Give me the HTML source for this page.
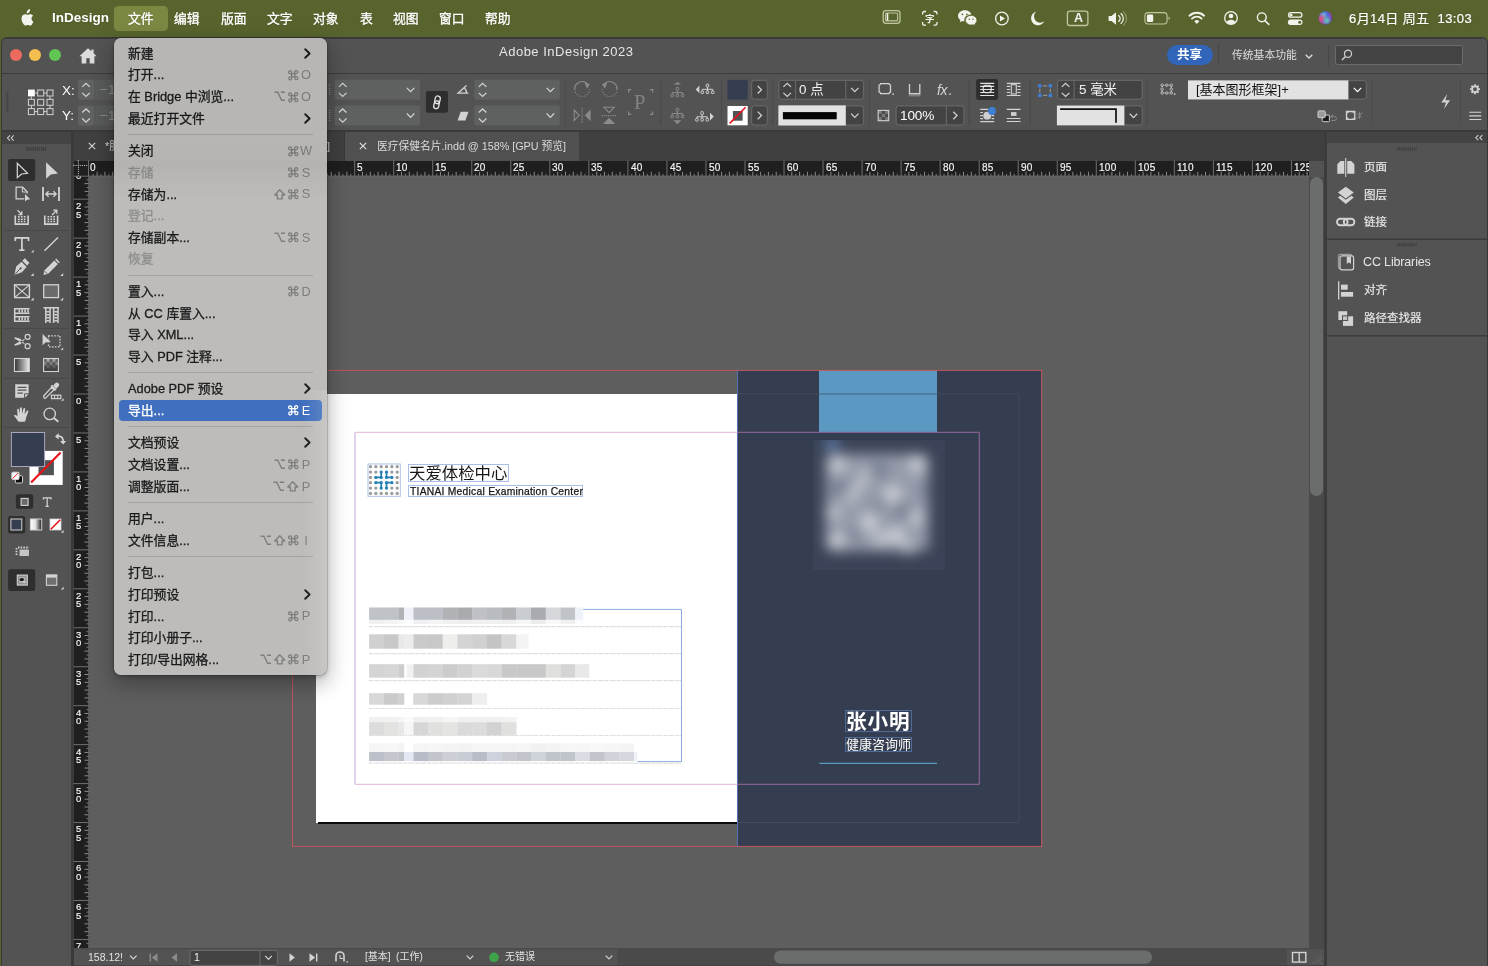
<!DOCTYPE html><html lang="zh-CN"><head><meta charset="utf-8"><title>Adobe InDesign 2023</title><style>
*{box-sizing:border-box;margin:0;padding:0}
html,body{width:1488px;height:966px;overflow:hidden;background:#58642d;}
body{font-family:"Liberation Sans","Noto Sans CJK SC",sans-serif;position:relative;color:#fff}
.abs{position:absolute}
.t,.mb,.mi,.rl,.rv{will-change:transform}
.t{position:absolute;white-space:nowrap;line-height:1}
svg{position:absolute;overflow:visible}
#menubar{position:absolute;left:0;top:0;width:1488px;height:37px;background:#58642d}
#win{position:absolute;left:2px;top:38px;width:1484.7px;height:928px;background:#535353;border-radius:5px 5px 0 0;overflow:hidden;box-shadow:0 0 0 1px #373737}
.mb{position:absolute;top:11px;font-size:13px;line-height:14px;color:#fff;white-space:nowrap;text-shadow:0 0 2px rgba(0,0,0,.25);-webkit-text-stroke:.3px #fff}
.mi{position:absolute;left:14px;font-size:12.8px;line-height:16px;color:#1c1c1c;white-space:nowrap;-webkit-text-stroke:.3px currentColor}
.mi.dis{color:#8d8d8b}
.sc{position:absolute;right:15.5px;font-size:12.8px;line-height:16px;color:#8c8c8a;white-space:nowrap}
.msep{position:absolute;left:14px;right:14px;height:1px;background:#a3a3a1}
.rv{position:absolute;font-size:9.5px;line-height:10px;color:#f6f6f6;-webkit-text-stroke:.16px #f6f6f6;white-space:nowrap}
.rl{position:absolute;letter-spacing:.3px;font-size:10px;line-height:10px;color:#f6f6f6;-webkit-text-stroke:.16px #f6f6f6;white-space:nowrap}
</style></head><body>
<div id="menubar"><div class="abs" style="left:114px;top:6px;width:54px;height:25px;border-radius:4.5px;background:#7b8842"></div><svg style="left:19px;top:8.6px;" width="15" height="18" viewBox="0 0 15 18" ><path fill="#f2f2ee" d="M10.3 2.9c.6-.8 1-1.800.9-2.900-.9.100-2 .6-2.600 1.400-.6.700-1.100 1.800-.9 2.800 1 .1 2-.5 2.600-1.300zM12.500 9.500c0-1.900 1.500-2.800 1.600-2.800-.9-1.300-2.200-1.500-2.700-1.500-1.200-.1-2.200.700-2.800.700-.6 0-1.500-.7-2.400-.6-1.300 0-2.400.700-3.100 1.800-1.300 2.300-.3 5.700 1 7.500.6.900 1.400 1.900 2.300 1.900.9 0 1.300-.6 2.400-.6 1.100 0 1.400.600 2.400.600 1 0 1.600-.9 2.200-1.800.7-1 1-2 1-2.100-.1 0-1.900-.7-1.900-3.100z"/></svg><div class="mb" style="left:52px;top:11.3px;font-weight:bold;font-size:13.5px;-webkit-text-stroke:0">InDesign</div><div class="mb" style="left:128px;top:11.7px;font-size:12.8px">文件</div><div class="mb" style="left:174px;top:11.7px;font-size:12.8px">编辑</div><div class="mb" style="left:220.5px;top:11.7px;font-size:12.8px">版面</div><div class="mb" style="left:267px;top:11.7px;font-size:12.8px">文字</div><div class="mb" style="left:313px;top:11.7px;font-size:12.8px">对象</div><div class="mb" style="left:359.5px;top:11.7px;font-size:12.8px">表</div><div class="mb" style="left:392.5px;top:11.7px;font-size:12.8px">视图</div><div class="mb" style="left:439px;top:11.7px;font-size:12.8px">窗口</div><div class="mb" style="left:485px;top:11.7px;font-size:12.8px">帮助</div><div class="mb" style="left:1348.5px;top:11.5px;font-size:13px;letter-spacing:.4px;-webkit-text-stroke:.2px #fff">6月14日 周五&nbsp; 13:03</div><svg style="left:0;top:0" width="1488" height="37" viewBox="0 0 1488 37"><rect x="883.200" y="10.600" width="16.800" height="12.700" rx="2.800" fill="none" stroke="#c2c5a0" stroke-width="1.300"/><rect x="885.600" y="13" width="12" height="7.900" rx="1" fill="none" stroke="#c2c5a0" stroke-width="1.100"/><path d="M887.500 13.300V20.600" stroke="#f3f3ee" stroke-width="1.600"/><path d="M922.600 14.600V13.200A1.700 1.700 0 0 1 924.300 11.500H926M933.600 11.500H935.300A1.700 1.700 0 0 1 937 13.200V14.600M937 22V23.500A1.700 1.700 0 0 1 935.300 25.200H933.600M926 25.200H924.300A1.700 1.700 0 0 1 922.600 23.500V22" fill="none" stroke="#f3f3ee" stroke-width="1.300"/><path d="M964.700 10.200C961 10.200 958 12.700 958 15.800C958 17.500 958.900 19 960.400 20.100L959.800 22.300L962.300 21C963 21.200 963.700 21.300 964.500 21.300C964.400 20.900 964.300 20.500 964.300 20C964.300 16.900 967.300 14.500 970.900 14.500C971.100 14.500 971.300 14.500 971.400 14.500C970.800 12 968 10.200 964.700 10.200z" fill="#f3f3ee"/><path d="M971.200 15.400C968 15.400 965.400 17.500 965.400 20.200C965.400 22.800 968 25 971.200 25C971.900 25 972.500 24.900 973.100 24.700L975.200 25.900L974.700 24C976 23.100 976.900 21.700 976.900 20.200C976.900 17.500 974.400 15.400 971.200 15.400z" fill="#f3f3ee" stroke="#58642d" stroke-width=".7"/><circle cx="962.400" cy="14.300" r=".85" fill="#58642d"/><circle cx="966.900" cy="14.300" r=".85" fill="#58642d"/><circle cx="969.300" cy="19.200" r=".75" fill="#58642d"/><circle cx="973" cy="19.200" r=".75" fill="#58642d"/><circle cx="1001.900" cy="18.500" r="6.300" fill="none" stroke="#f3f3ee" stroke-width="1.300"/><path d="M1000 15.500V21.500L1005 18.500z" fill="#f3f3ee"/><path d="M1036.300 11.600A6.900 6.900 0 1 0 1044.200 21.300A6.200 6.200 0 0 1 1036.300 11.600z" fill="#f3f3ee"/><rect x="1067.400" y="11.100" width="20.500" height="14.400" rx="2.600" fill="none" stroke="#c2c5a0" stroke-width="1.300"/><path d="M1108.600 16H1111.500L1116 12.300V24.700L1111.500 21H1108.600z" fill="#f3f3ee"/><path d="M1118.600 15.600A3.500 3.500 0 0 1 1118.600 21.400M1121 13.600A6.300 6.300 0 0 1 1121 23.400" fill="none" stroke="#f3f3ee" stroke-width="1.250" stroke-linecap="round"/><path d="M1123.600 11.800A9.200 9.200 0 0 1 1123.600 25.200" fill="none" stroke="#c2c5a0" stroke-width="1.100" stroke-linecap="round" opacity=".6"/><rect x="1144.900" y="12.600" width="22.200" height="11.400" rx="3.400" fill="none" stroke="#c2c5a0" stroke-width="1.100"/><path d="M1168.600 16.300V20.300L1170.200 18.300z" fill="#c2c5a0"/><rect x="1146.900" y="14.500" width="6.300" height="7.600" rx="1.400" fill="#f3f3ee"/><path d="M1189.500 15.700A10.500 10.500 0 0 1 1204.100 15.700M1192 18.600A6.800 6.800 0 0 1 1201.600 18.600" fill="none" stroke="#f3f3ee" stroke-width="1.900" stroke-linecap="round"/><path d="M1194.300 21.200A3.600 3.600 0 0 1 1199.300 21.200L1196.800 23.900z" fill="#f3f3ee"/><circle cx="1231" cy="18" r="6.300" fill="none" stroke="#f3f3ee" stroke-width="1.300"/><circle cx="1231" cy="16" r="2.300" fill="#f3f3ee"/><path d="M1226.600 22.200A4.600 3.600 0 0 1 1235.400 22.200A6 6 0 0 1 1226.600 22.200z" fill="#f3f3ee"/><circle cx="1261.800" cy="17.300" r="4.400" fill="none" stroke="#f3f3ee" stroke-width="1.400"/><path d="M1265 20.700L1268.800 24.400" stroke="#f3f3ee" stroke-width="1.600" stroke-linecap="round"/><rect x="1288.500" y="12.600" width="13.400" height="4.600" rx="2.300" fill="none" stroke="#f3f3ee" stroke-width="1.200"/><circle cx="1291" cy="14.900" r="1.500" fill="#f3f3ee"/><rect x="1287.900" y="19.500" width="14.600" height="5.400" rx="2.700" fill="#f3f3ee"/><circle cx="1299.700" cy="22.200" r="1.500" fill="#58642d"/><defs><radialGradient id="si1" cx=".35" cy=".3" r=".8"><stop offset="0" stop-color="#6fd0e8"/><stop offset=".35" stop-color="#4a6fd8"/><stop offset=".7" stop-color="#8a3fb8"/><stop offset="1" stop-color="#3a2a6a"/></radialGradient><radialGradient id="si2" cx=".2" cy=".55" r=".45"><stop offset="0" stop-color="#f04a7a"/><stop offset="1" stop-color="#f04a7a" stop-opacity="0"/></radialGradient><radialGradient id="si3" cx=".6" cy=".7" r=".4"><stop offset="0" stop-color="#5ad0c0"/><stop offset="1" stop-color="#5ad0c0" stop-opacity="0"/></radialGradient></defs><circle cx="1325.500" cy="18" r="6.800" fill="url(#si1)"/><circle cx="1325.500" cy="18" r="6.800" fill="url(#si2)"/><circle cx="1325.500" cy="18" r="6.800" fill="url(#si3)"/></svg><div class="t" style="left:925.3px;top:13.6px;font-size:9.5px;font-weight:bold;color:#f3f3ee">字</div><div class="t" style="left:1073.5px;top:12.4px;font-size:12.5px;font-weight:bold;color:#f3f3ee">A</div></div>
<div class="abs" style="left:1486px;top:42px;width:2px;height:924px;background:#595959"></div>
<div id="win"><div class="abs" style="left:0px;top:0px;width:1486px;height:1px;background:#3e3e3e"></div><div class="abs" style="left:0px;top:35px;width:1486px;height:1px;background:#3c3c3c"></div><div class="abs" style="left:7.8px;top:11px;width:12px;height:12px;border-radius:6px;background:#ec6a5e"></div><div class="abs" style="left:27.4px;top:11px;width:12px;height:12px;border-radius:6px;background:#f4bf4f"></div><div class="abs" style="left:47px;top:11px;width:12px;height:12px;border-radius:6px;background:#61c554"></div><svg style="left:76.7px;top:9.5px;" width="18" height="16" viewBox="0 0 18 16" ><path fill="#dcdcdc" d="M9 0.300L0.300 8.200h2.300V15.600h4.700V10.300h3.400V15.600h4.700V8.200h2.300L14.600 5.300V1.500h-2.200v1.800z"/></svg><div class="t" style="left:497px;top:6.8px;font-size:13px;color:#e6e6e6;letter-spacing:.5px">Adobe InDesign 2023</div><div class="abs" style="left:1165px;top:6.5px;width:45.5px;height:20.8px;border-radius:10.400px;background:#3065ba"></div><div class="abs" style="left:1216px;top:6px;width:1px;height:22px;background:#484848"></div><div class="t" style="left:1175px;top:10.5px;font-size:12.5px;font-weight:bold;color:#fff">共享</div><div class="t" style="left:1229.5px;top:11.5px;font-size:10.8px;color:#dcdcdc">传统基本功能</div><svg style="left:1303px;top:15.5px;" width="8" height="5" viewBox="0 0 8 5" ><path d="M.7.700l3.300 3.300L7.300.700" fill="none" stroke="#dcdcdc" stroke-width="1.300"/></svg><div class="abs" style="left:1326px;top:6px;width:1px;height:22px;background:#474747"></div><div class="abs" style="left:1332.5px;top:7.3px;width:128px;height:19.3px;background:#444;border:1px solid #6c6c6c;border-radius:2.500px"></div><svg style="left:1339px;top:11px;" width="12" height="12" viewBox="0 0 12 12" ><circle cx="7" cy="4.800" r="3.600" fill="none" stroke="#cfcfcf" stroke-width="1.200"/><path d="M4.500 7.500L1 11" stroke="#cfcfcf" stroke-width="1.400"/></svg><div class="abs" style="left:0px;top:92px;width:1486px;height:2px;background:#3a3a3a"></div><div class="abs" style="left:0px;top:94px;width:70px;height:11.5px;background:#444"></div><svg style="left:5.3px;top:96.5px;" width="7" height="6" viewBox="0 0 7 6" ><path d="M3 .3L.5 3L3 5.700M6.700 .3L4.200 3L6.700 5.700" fill="none" stroke="#cfcfcf" stroke-width="1.100"/></svg><div class="abs" style="left:69.2px;top:93px;width:2.5px;height:840px;background:#3a3a3a"></div><div class="abs" style="left:71.5px;top:93.5px;width:1252.5px;height:29px;background:#404040"></div><div class="abs" style="left:343.2px;top:94px;width:233.5px;height:28.5px;background:#505050"></div><div class="abs" style="left:342.2px;top:94px;width:1px;height:28.5px;background:#383838"></div><svg style="left:85.6px;top:104px;" width="8" height="8" viewBox="0 0 8 8" ><path d="M.8.800l6.400 6.400M7.200.800L.8 7.200" stroke="#d6d6d6" stroke-width="1.100"/></svg><div class="t" style="left:102.7px;top:103px;font-size:11px;color:#d6d6d6">*服</div><div class="t" style="left:324.5px;top:103px;font-size:11px;color:#d6d6d6">]</div><svg style="left:357px;top:104px;" width="8" height="8" viewBox="0 0 8 8" ><path d="M.8.800l6.400 6.400M7.200.800L.8 7.200" stroke="#e2e2e2" stroke-width="1.100"/></svg><div class="t" style="left:374.5px;top:102.5px;font-size:10.8px;color:#dadada;letter-spacing:-.03px">医疗保健名片.indd @ 158% [GPU 预览]</div><svg style="left:0px;top:0px;" width="1486" height="928" viewBox="2 38 1486 928" ><path d="M7.300 92.500V112.500" stroke="#3f3f3f" stroke-width="2.400" stroke-dasharray="1.100 .9"/><rect x="28" y="89.6" width="6.800" height="6.800" fill="#fff"/><rect x="28.4" y="99.3" width="6" height="6" fill="none" stroke="#d3d3d3" stroke-width="1"/><rect x="28.4" y="108.6" width="6" height="6" fill="none" stroke="#d3d3d3" stroke-width="1"/><rect x="37.7" y="90" width="6" height="6" fill="none" stroke="#d3d3d3" stroke-width="1"/><rect x="37.7" y="99.3" width="6" height="6" fill="none" stroke="#d3d3d3" stroke-width="1"/><rect x="37.7" y="108.6" width="6" height="6" fill="none" stroke="#d3d3d3" stroke-width="1"/><rect x="47" y="90" width="6" height="6" fill="none" stroke="#d3d3d3" stroke-width="1"/><rect x="47" y="99.3" width="6" height="6" fill="none" stroke="#d3d3d3" stroke-width="1"/><rect x="47" y="108.6" width="6" height="6" fill="none" stroke="#d3d3d3" stroke-width="1"/><path d="M34.800 93H37.700M44.100 93H47M34.800 111.600H37.700M44.100 111.600H47M31.400 96.400V99.300M31.400 105.700V108.600M50 96.400V99.300M50 105.700V108.600" stroke="#d3d3d3" stroke-width="1"/><rect x="78" y="79.8" width="16" height="19.9" rx="2" fill="#606261"/><rect x="94.500" y="79.8" width="22" height="19.9" fill="#595b5a"/><path d="M82.2 86.85L86 83.25L89.8 86.85" fill="none" stroke="#d3d3d3" stroke-width="1.25"/><path d="M82.2 92.85L86 96.45L89.8 92.85" fill="none" stroke="#d3d3d3" stroke-width="1.25"/><rect x="78" y="105.4" width="16" height="20.1" rx="2" fill="#606261"/><rect x="94.500" y="105.4" width="22" height="20.1" fill="#595b5a"/><path d="M82.2 112.55L86 108.95L89.8 112.55" fill="none" stroke="#d3d3d3" stroke-width="1.25"/><path d="M82.2 118.55L86 122.15L89.8 118.55" fill="none" stroke="#d3d3d3" stroke-width="1.25"/><rect x="334.800" y="79.8" width="85.200" height="19.9" rx="2" fill="#5f6160"/><path d="M338.9 86.85L342.7 83.25L346.5 86.85" fill="none" stroke="#d3d3d3" stroke-width="1.25"/><path d="M338.9 92.85L342.7 96.45L346.5 92.85" fill="none" stroke="#d3d3d3" stroke-width="1.25"/><path d="M406.9 87.85L410.6 91.65L414.3 87.85" fill="none" stroke="#d3d3d3" stroke-width="1.25"/><rect x="474.300" y="79.8" width="85.500" height="19.9" rx="2" fill="#5f6160"/><path d="M478.8 86.85L482.6 83.25L486.4 86.85" fill="none" stroke="#d3d3d3" stroke-width="1.25"/><path d="M478.8 92.85L482.6 96.45L486.4 92.85" fill="none" stroke="#d3d3d3" stroke-width="1.25"/><path d="M546.7 87.85L550.4 91.65L554.1 87.85" fill="none" stroke="#d3d3d3" stroke-width="1.25"/><rect x="334.800" y="105.4" width="85.200" height="20.1" rx="2" fill="#5f6160"/><path d="M338.9 112.55L342.7 108.95L346.5 112.55" fill="none" stroke="#d3d3d3" stroke-width="1.25"/><path d="M338.9 118.55L342.7 122.15L346.5 118.55" fill="none" stroke="#d3d3d3" stroke-width="1.25"/><path d="M406.9 113.55L410.6 117.35L414.3 113.55" fill="none" stroke="#d3d3d3" stroke-width="1.25"/><rect x="474.300" y="105.4" width="85.500" height="20.1" rx="2" fill="#5f6160"/><path d="M478.8 112.55L482.6 108.95L486.4 112.55" fill="none" stroke="#d3d3d3" stroke-width="1.25"/><path d="M478.8 118.55L482.6 122.15L486.4 118.55" fill="none" stroke="#d3d3d3" stroke-width="1.25"/><path d="M546.7 113.55L550.4 117.35L554.1 113.55" fill="none" stroke="#d3d3d3" stroke-width="1.25"/><path d="M329.500 84V95M329.500 110V121" stroke="#8b8b8b" stroke-width="1.200" stroke-dasharray="1 1"/><rect x="425.900" y="90.900" width="22.100" height="21.900" rx="2.200" fill="#2e2e2e"/><g transform="rotate(12 437 102.300)"><rect x="434.500" y="95.900" width="5" height="7.800" rx="2.500" fill="none" stroke="#e6e6e6" stroke-width="1.300"/><rect x="434.500" y="100.900" width="5" height="7.800" rx="2.500" fill="none" stroke="#e6e6e6" stroke-width="1.300"/><path d="M437 99.500V105" stroke="#2e2e2e" stroke-width="0"/></g><path d="M466.500 85.500L458 93.200H468.400M464 87.500Q466.800 90 466.600 93.200" fill="none" stroke="#d3d3d3" stroke-width="1.250"/><path d="M460.700 111.800H468.500L465.400 120.500H457.600z" fill="#d3d3d3"/><path d="M565.4 80V125.500" stroke="#494949" stroke-width="1"/><path d="M574.700 89A7.500 7.500 0 0 1 587.300 83.600" fill="none" stroke="#8b8b8b" stroke-width="1.200"/><path d="M584.500 82.200L590 84.300L586.800 88.500z" fill="#8b8b8b"/><path d="M574.700 89A7.500 7.500 0 0 0 589.700 89" fill="none" stroke="#8b8b8b" stroke-width="1.200" stroke-dasharray="1.100 1.700"/><path d="M617.100 89A7.500 7.500 0 0 0 604.500 83.600" fill="none" stroke="#8b8b8b" stroke-width="1.200"/><path d="M607.300 82.200L601.800 84.300L605 88.500z" fill="#8b8b8b"/><path d="M617.100 89A7.500 7.500 0 0 1 602.100 89" fill="none" stroke="#8b8b8b" stroke-width="1.200" stroke-dasharray="1.100 1.700"/><path d="M574.200 110V120.600L579.200 115.300z" fill="none" stroke="#8b8b8b" stroke-width="1.100"/><path d="M590.600 109.400V121.200L584.800 115.300z" fill="#8b8b8b"/><path d="M582.200 108V123" stroke="#8b8b8b" stroke-width="1.200" stroke-dasharray="1.200 1"/><path d="M604 107.300H614.200L609.100 112.600z" fill="none" stroke="#8b8b8b" stroke-width="1.100"/><path d="M603 124H615.200L609.100 117.700z" fill="#8b8b8b"/><path d="M601.500 115.600H616.500" stroke="#8b8b8b" stroke-width="1.200" stroke-dasharray="1.200 1"/><path d="M628.600 92.400V89.700H631.300M650 89.700H652.700V92.400M652.700 111.600V114.300H650M631.300 114.300H628.600V111.600" fill="none" stroke="#8b8b8b" stroke-width="1.200"/><path d="M660.7 80V125.500" stroke="#494949" stroke-width="1"/><g fill="none" stroke="#8b8b8b" stroke-width="1"><rect x="676.1" y="87.4" width="2.600" height="3" rx=".8"/><path d="M677.4 90.4V94.3M672.2 92.6H682.6M672.2 92.6V94.3M682.6 92.6V94.3"/><rect x="670.9" y="94.3" width="2.600" height="2.600" rx=".8"/><rect x="676.1" y="94.3" width="2.600" height="2.600" rx=".8"/><rect x="681.3" y="94.3" width="2.600" height="2.600" rx=".8"/></g><path d="M673.700 84.600H681.100L677.400 82z" fill="#8b8b8b"/><g fill="none" stroke="#8b8b8b" stroke-width="1"><rect x="676.1" y="108.3" width="2.600" height="3" rx=".8"/><path d="M677.4 111.3V115.2M672.2 113.5H682.6M672.2 113.5V115.2M682.6 113.5V115.2"/><rect x="670.9" y="115.2" width="2.600" height="2.600" rx=".8"/><rect x="676.1" y="115.2" width="2.600" height="2.600" rx=".8"/><rect x="681.3" y="115.2" width="2.600" height="2.600" rx=".8"/></g><path d="M673.400 120.300H681.400L677.400 124.200z" fill="#8b8b8b"/><g fill="none" stroke="#d3d3d3" stroke-width="1"><rect x="706.2" y="84.1" width="2.600" height="3" rx=".8"/><path d="M707.5 87.1V91M702.3 89.3H712.7M702.3 89.3V91M712.7 89.3V91"/><rect x="701" y="91" width="2.600" height="2.600" rx=".8"/><rect x="706.2" y="91" width="2.600" height="2.600" rx=".8"/><rect x="711.4" y="91" width="2.600" height="2.600" rx=".8"/></g><path d="M699.400 85.500V93.300L695.800 89.400z" fill="#d3d3d3"/><g fill="none" stroke="#d3d3d3" stroke-width="1"><rect x="700.8" y="111.6" width="2.600" height="3" rx=".8"/><path d="M702.1 114.6V118.5M696.9 116.8H707.3M696.9 116.8V118.5M707.3 116.8V118.5"/><rect x="695.6" y="118.5" width="2.600" height="2.600" rx=".8"/><rect x="700.8" y="118.5" width="2.600" height="2.600" rx=".8"/><rect x="706" y="118.5" width="2.600" height="2.600" rx=".8"/></g><path d="M710 112.700V120.500L713.800 116.600z" fill="#d3d3d3"/><path d="M721.5 80V125.500" stroke="#494949" stroke-width="1"/><rect x="727.500" y="79.800" width="20.200" height="19.700" fill="#353d50"/><rect x="727.500" y="106" width="20.200" height="19.300" fill="#fff"/><rect x="732.900" y="111" width="9.700" height="9.700" fill="#4f5354"/><path d="M729.700 123.400L745.600 107.300" stroke="#e8131a" stroke-width="1.500"/><rect x="751.700" y="80.3" width="15.600" height="18.9" rx="2.500" fill="#434343" stroke="#6c6c6c" stroke-width="1"/><path d="M757.7 85.95L761.5 89.75L757.7 93.55" fill="none" stroke="#d3d3d3" stroke-width="1.25"/><rect x="751.700" y="105.9" width="15.600" height="19.1" rx="2.500" fill="#434343" stroke="#6c6c6c" stroke-width="1"/><path d="M757.7 111.65L761.5 115.45L757.7 119.25" fill="none" stroke="#d3d3d3" stroke-width="1.25"/><path d="M772.7 80V125.500" stroke="#494949" stroke-width="1"/><rect x="778.900" y="80.300" width="84.500" height="18.900" rx="2.500" fill="#434343" stroke="#6c6c6c" stroke-width="1"/><path d="M795.600 80.300V99.200M845.800 80.300V99.200" stroke="#6c6c6c" stroke-width="1"/><path d="M783.4 86.85L787.2 83.25L791 86.85" fill="none" stroke="#d3d3d3" stroke-width="1.25"/><path d="M783.4 92.85L787.2 96.45L791 92.85" fill="none" stroke="#d3d3d3" stroke-width="1.25"/><path d="M851.1 87.9L854.8 91.7L858.5 87.9" fill="none" stroke="#d3d3d3" stroke-width="1.25"/><rect x="778.900" y="105.900" width="84.500" height="19.100" rx="2.500" fill="#434343" stroke="#6c6c6c" stroke-width="1"/><rect x="778.400" y="105.400" width="67.400" height="20.100" fill="#e2e2e2"/><rect x="782.900" y="112.100" width="53.800" height="7.200" fill="#050505"/><path d="M851.1 113.6L854.8 117.4L858.5 113.6" fill="none" stroke="#d3d3d3" stroke-width="1.25"/><path d="M869.5 80V125.500" stroke="#494949" stroke-width="1"/><path d="M880.600 83.500H889A1.500 1.500 0 0 0 890.500 85V92.200A1.500 1.500 0 0 0 889 93.700H880.600A1.500 1.500 0 0 0 879.100 92.200V85A1.500 1.500 0 0 0 880.600 83.500z" fill="none" stroke="#d3d3d3" stroke-width="1.250"/><rect x="892.300" y="93.400" width="1.500" height="1.500" fill="#d3d3d3"/><defs><linearGradient id="sh1" x1="0" x2="0" y1="0" y2="1"><stop offset="0" stop-color="#aaa" stop-opacity=".8"/><stop offset="1" stop-color="#aaa" stop-opacity="0"/></linearGradient></defs><path d="M909.500 84.100V93.600H919.800V84.100" fill="none" stroke="#d3d3d3" stroke-width="1.300"/><rect x="908.800" y="94.300" width="11.700" height="3" fill="url(#sh1)"/><rect x="949.300" y="93.400" width="1.500" height="1.500" fill="#d3d3d3"/><rect x="878.6" y="110.6" width="3.300" height="3.300" fill="#7b7b7b"/><rect x="878.6" y="113.9" width="3.300" height="3.300" fill="#4a4a4a"/><rect x="878.6" y="117.2" width="3.300" height="3.300" fill="#7b7b7b"/><rect x="881.9" y="110.6" width="3.300" height="3.300" fill="#4a4a4a"/><rect x="881.9" y="113.9" width="3.300" height="3.300" fill="#7b7b7b"/><rect x="881.9" y="117.2" width="3.300" height="3.300" fill="#4a4a4a"/><rect x="885.2" y="110.6" width="3.300" height="3.300" fill="#7b7b7b"/><rect x="885.2" y="113.9" width="3.300" height="3.300" fill="#4a4a4a"/><rect x="885.2" y="117.2" width="3.300" height="3.300" fill="#7b7b7b"/><rect x="878.200" y="110.400" width="10.500" height="10.300" fill="none" stroke="#d3d3d3" stroke-width="1.100"/><rect x="896.100" y="105.900" width="67.800" height="19.100" rx="2.500" fill="#434343" stroke="#6c6c6c" stroke-width="1"/><path d="M946.300 105.900V125M" stroke="#6c6c6c" stroke-width="1"/><path d="M953.3 111.7L957.1 115.5L953.3 119.3" fill="none" stroke="#d3d3d3" stroke-width="1.25"/><path d="M969.1 80V125.500" stroke="#494949" stroke-width="1"/><rect x="976.200" y="79.100" width="21.800" height="20.900" rx="2.500" fill="#2e2e2e"/><path d="M980.200 83.400H994.200M980.200 86.400H994.200M980.200 89.500H994.200M980.200 92.500H994.200M980.200 95.500H994.200" stroke="#e4e4e4" stroke-width="1.100"/><rect x="983.200" y="85.200" width="8" height="7.400" rx="2.500" fill="none" stroke="#e4e4e4" stroke-width="1.100"/><path d="M1006.800 83.400H1020.500M1006.800 86.400H1010M1017.500 86.400H1020.500M1006.800 89.500H1010M1017.500 89.500H1020.500M1006.800 92.500H1010M1017.500 92.500H1020.500M1006.800 95.500H1020.500" stroke="#d3d3d3" stroke-width="1.100"/><rect x="1011.300" y="84.700" width="5" height="9.300" fill="none" stroke="#d3d3d3" stroke-width="1.100"/><path d="M980.200 109.400H988M980.200 112.500H983M980.200 115.600H983M980.200 118.600H983M991.500 115.600H994.200M991.500 118.600H994.200M980.200 121.600H994.200" stroke="#d3d3d3" stroke-width="1.100"/><circle cx="987.200" cy="115.700" r="3.900" fill="#cfcfcf"/><circle cx="992" cy="111" r="3.900" fill="#3d7fd6"/><path d="M1006.800 109.400H1020.500M1006.800 118.500H1020.500M1006.800 121.500H1020.500" stroke="#d3d3d3" stroke-width="1.100"/><rect x="1011" y="112.100" width="5.500" height="3.800" fill="#cfcfcf"/><path d="M1030.4 80V125.500" stroke="#494949" stroke-width="1"/><rect x="1038.1" y="84.1" width="3.500" height="3.400" fill="#3d7fd6"/><rect x="1048.6" y="84.1" width="3.500" height="3.400" fill="#3d7fd6"/><rect x="1038.1" y="93.7" width="3.500" height="3.400" fill="#3d7fd6"/><rect x="1048.6" y="93.7" width="3.500" height="3.400" fill="#3d7fd6"/><path d="M1043 85.800H1047.200M1043 95.400H1047.200M1039.800 88.700V92.500M1050.300 88.700V92.500" stroke="#8f8f8f" stroke-width="1.300"/><rect x="1057.400" y="80.300" width="84.800" height="18.900" rx="2.500" fill="#434343" stroke="#6c6c6c" stroke-width="1"/><path d="M1074.100 80.300V99.200" stroke="#6c6c6c" stroke-width="1"/><path d="M1061.8 86.85L1065.6 83.25L1069.4 86.85" fill="none" stroke="#d3d3d3" stroke-width="1.25"/><path d="M1061.8 92.85L1065.6 96.45L1069.4 92.85" fill="none" stroke="#d3d3d3" stroke-width="1.25"/><rect x="1057.400" y="105.900" width="84.800" height="19.100" rx="2.500" fill="#434343" stroke="#6c6c6c" stroke-width="1"/><rect x="1056.900" y="105.600" width="67.500" height="19.700" fill="#e2e2e2"/><path d="M1060.100 109.200H1116V122.800" fill="none" stroke="#111" stroke-width="1.700"/><path d="M1129.8 113.8L1133.5 117.6L1137.2 113.8" fill="none" stroke="#d3d3d3" stroke-width="1.25"/><path d="M1147.2 80V125.500" stroke="#494949" stroke-width="1"/><rect x="1162.100" y="85.200" width="9.300" height="7.800" fill="none" stroke="#d3d3d3" stroke-width="1.100" stroke-dasharray="1.500 1"/><rect x="1161" y="84.1" width="2.200" height="2.200" rx=".6" fill="#535353" stroke="#d3d3d3" stroke-width=".8"/><rect x="1165.6" y="84.1" width="2.200" height="2.200" rx=".6" fill="#535353" stroke="#d3d3d3" stroke-width=".8"/><rect x="1170.2" y="84.1" width="2.200" height="2.200" rx=".6" fill="#535353" stroke="#d3d3d3" stroke-width=".8"/><rect x="1161" y="91.9" width="2.200" height="2.200" rx=".6" fill="#535353" stroke="#d3d3d3" stroke-width=".8"/><rect x="1165.6" y="91.9" width="2.200" height="2.200" rx=".6" fill="#535353" stroke="#d3d3d3" stroke-width=".8"/><rect x="1170.2" y="91.9" width="2.200" height="2.200" rx=".6" fill="#535353" stroke="#d3d3d3" stroke-width=".8"/><rect x="1161" y="88" width="2.200" height="2.200" rx=".6" fill="#535353" stroke="#d3d3d3" stroke-width=".8"/><rect x="1170.2" y="88" width="2.200" height="2.200" rx=".6" fill="#535353" stroke="#d3d3d3" stroke-width=".8"/><rect x="1173.900" y="93.400" width="1.500" height="1.500" fill="#d3d3d3"/><rect x="1188.500" y="80.700" width="177.800" height="18.400" rx="2.500" fill="#434343" stroke="#6c6c6c" stroke-width="1"/><rect x="1188" y="80.400" width="160.400" height="19" fill="#e2e2e2"/><path d="M1353.8 87.9L1357.5 91.7L1361.2 87.9" fill="none" stroke="#fff" stroke-width="1.25"/><rect x="1322.200" y="115" width="7.200" height="6.700" rx="1" fill="#1b1b1b" stroke="#d3d3d3" stroke-width="1"/><rect x="1318" y="110.900" width="7.200" height="6.700" rx="1" fill="#9a9a9a" stroke="#d3d3d3" stroke-width="1"/><path d="M1331 116.300H1334.300A2.100 2.100 0 0 1 1334.300 120.500H1331.500M1332.800 114.400L1330.800 116.300L1332.800 118.200" fill="none" stroke="#8b8b8b" stroke-width="1"/><path d="M1346.500 111.500H1354.800V119.400H1346.500z" fill="none" stroke="#d3d3d3" stroke-width="1.300"/><path d="M1346.500 111.500h2.500v1h-1.500v1.500h-1zM1354.800 111.500v2.500h-1v-1.500h-1.500v-1zM1346.500 119.400v-2.500h1v1.500h1.500v1zM1354.800 119.400h-2.500v-1h1.500v-1.500h1z" fill="#d3d3d3"/><path d="M1356.500 118.800L1362.500 112.300M1357.300 113.300L1361.800 117.600M1359.500 111.800V119" stroke="#8b8b8b" stroke-width=".9"/><path d="M1372.400 80V125.500M1460.500 80V125.500" stroke="#4b4b4b" stroke-width="1"/><path d="M1447.300 94L1441.300 102.600H1446L1444 109L1450.100 100.200H1445.400z" fill="#d3d3d3"/><circle cx="1475" cy="89.200" r="2.900" fill="none" stroke="#d3d3d3" stroke-width="1.800"/><path d="M1478.4 89.2L1480 89.2" stroke="#d3d3d3" stroke-width="1.800"/><path d="M1477.4 91.6L1478.54 92.74" stroke="#d3d3d3" stroke-width="1.800"/><path d="M1475 92.6L1475 94.2" stroke="#d3d3d3" stroke-width="1.800"/><path d="M1472.6 91.6L1471.46 92.74" stroke="#d3d3d3" stroke-width="1.800"/><path d="M1471.6 89.2L1470 89.2" stroke="#d3d3d3" stroke-width="1.800"/><path d="M1472.6 86.8L1471.46 85.66" stroke="#d3d3d3" stroke-width="1.800"/><path d="M1475 85.8L1475 84.2" stroke="#d3d3d3" stroke-width="1.800"/><path d="M1477.4 86.8L1478.54 85.66" stroke="#d3d3d3" stroke-width="1.800"/><path d="M1469.300 112.300H1481.300M1469.300 115.900H1481.300M1469.300 119.500H1481.300" stroke="#d3d3d3" stroke-width="1.100"/></svg><div class="t" style="left:59.8px;top:45.8px;font-size:13.5px;color:#fff">X:</div><div class="t" style="left:59.8px;top:71.4px;font-size:13.5px;color:#fff">Y:</div><div class="t" style="left:97.5px;top:45.3px;font-size:13.5px;color:#8a8a8a">−1</div><div class="t" style="left:97.5px;top:70.9px;font-size:13.5px;color:#8a8a8a">−1</div><div class="t" style="left:631.6px;top:54px;font-family:'Liberation Serif',serif;font-size:20.5px;color:#838383">P</div><div class="t" style="left:797.4px;top:44.6px;font-size:13.4px;color:#f2f2f2">0 点</div><div class="t" style="left:898.4px;top:70.8px;font-size:13.6px;color:#fff;letter-spacing:-.15px">100%</div><div class="t" style="left:1077.3px;top:44.6px;font-size:13.4px;color:#f2f2f2">5 毫米</div><div class="t" style="left:1194px;top:45.2px;font-size:13px;color:#111">[基本图形框架]+</div><div class="t" style="left:935.2px;top:44.6px;font-size:14px;font-style:italic;color:#d3d3d3;letter-spacing:-.3px">fx</div><svg style="left:0px;top:0px;" width="1486" height="928" viewBox="2 38 1486 928" ><path d="M26.300 149H46" stroke="#3e3e3e" stroke-width="4" stroke-dasharray="1.200 .9"/><rect x="8.100" y="159.100" width="27.100" height="21.800" rx="2.200" fill="#2e2e2e"/><path d="M17.3 163.200V177.700L21.600 174L27.500 173.300z" fill="none" stroke="#d3d3d3" stroke-width="1.250" stroke-linejoin="miter"/><path d="M46.1 162.200V178.700L50.800 174.600L58 173.600z" fill="#d3d3d3"/><path d="M24.3 198.800H16.100V187.200H22.600L27.200 191.800V193.500" fill="none" stroke="#d3d3d3" stroke-width="1.250"/><path d="M22.4 187.400V192H27" fill="none" stroke="#d3d3d3" stroke-width="1"/><path d="M25 194V201.600L27 199.700L30.200 199.200z" fill="#d3d3d3"/><path d="M43 187.100V201.100M59 187.100V201.100" stroke="#d3d3d3" stroke-width="1.800"/><path d="M46 194H56M48.600 191.300L45.800 194L48.600 196.700M53.400 191.300L56.200 194L53.400 196.700" fill="none" stroke="#d3d3d3" stroke-width="1.300"/><path d="M15.3 215.500V224.100H28.100V215.500" fill="none" stroke="#d3d3d3" stroke-width="1.600"/><path d="M18 216.800H25.500M18 219.200H25.500M18 221.600H25.500" stroke="#d3d3d3" stroke-width="1.500" stroke-dasharray="1.700 1.200"/><path d="M17.5 210.300L21.500 214.300M18.400 214.600H21.800V211.200" fill="none" stroke="#d3d3d3" stroke-width="1.300"/><path d="M44.800 215.500V224.100H57.600V215.500" fill="none" stroke="#d3d3d3" stroke-width="1.600"/><path d="M47.500 216.800H55M47.500 219.200H55M47.500 221.600H55" stroke="#d3d3d3" stroke-width="1.500" stroke-dasharray="1.700 1.200"/><path d="M52 215L56.500 210.500M53.200 210.200H56.800V213.800" fill="none" stroke="#d3d3d3" stroke-width="1.300"/><path d="M4.500 230.6H70" stroke="#484848" stroke-width="1"/><path d="M4.500 328.4H70" stroke="#484848" stroke-width="1"/><path d="M4.500 378.4H70" stroke="#484848" stroke-width="1"/><path d="M4.500 427.4H70" stroke="#484848" stroke-width="1"/><path d="M15.3 241V237.800H28.500V241M21.900 237.800V250.200M19.300 250.200H24.500" fill="none" stroke="#d3d3d3" stroke-width="1.700"/><path d="M33.7 252.4L33.7 249.8L31.1 252.4z" fill="#d3d3d3"/><path d="M44.500 250.800L58 237.400" stroke="#d3d3d3" stroke-width="1.400"/><path d="M14.3 275L16.200 266.500L21.500 261.800L26.600 266.900L21.900 272.200z" fill="#d3d3d3"/><path d="M22.300 260.800L24.800 258.300L29.500 263L27 265.500z" fill="#d3d3d3"/><path d="M14.600 274.700L20.200 268.700" stroke="#535353" stroke-width="1"/><circle cx="20.700" cy="268.300" r="1.100" fill="#535353"/><path d="M33.7 275.9L33.7 272.9L30.7 275.9z" fill="#d3d3d3"/><path d="M43.400 275L44.600 270.200L54.300 260.500L57.900 264.100L48.200 273.800z" fill="#d3d3d3"/><path d="M55.100 259.700L56.200 258.600L59.800 262.200L58.700 263.300z" fill="#d3d3d3"/><path d="M44.900 271.300L47.200 273.600" stroke="#535353" stroke-width=".9"/><path d="M63.2 275.9L63.2 272.9L60.2 275.9z" fill="#d3d3d3"/><rect x="14.600" y="284.800" width="14.800" height="12.800" fill="none" stroke="#d3d3d3" stroke-width="1.400"/><path d="M14.600 284.800L29.400 297.600M29.400 284.800L14.600 297.600" stroke="#d3d3d3" stroke-width="1.100"/><path d="M33.7 300.5L33.7 297.5L30.7 300.5z" fill="#d3d3d3"/><rect x="43.700" y="284.800" width="14.800" height="12.800" fill="#6b6b6b" stroke="#d3d3d3" stroke-width="1.300"/><path d="M63.2 300.5L63.2 297.5L60.2 300.5z" fill="#d3d3d3"/><path d="M14.700 308.800H29.500M14.700 313.200H29.500M14.700 316.800H29.500M14.700 321.200H29.500M14.700 308V322" fill="none" stroke="#d3d3d3" stroke-width="1.500"/><path d="M18.500 311H29.500M18.500 319H29.500" stroke="#d3d3d3" stroke-width="2.900" stroke-dasharray="1.600 1.300"/><path d="M43.500 307.800H59M45.800 308V323M50 308V323M53.600 308V323M58 308V323" fill="none" stroke="#d3d3d3" stroke-width="1.500"/><path d="M47.900 311V323M55.800 311V323" stroke="#d3d3d3" stroke-width="2.900" stroke-dasharray="1.600 1.400"/><circle cx="27.600" cy="336.800" r="2.500" fill="none" stroke="#d3d3d3" stroke-width="1.200"/><circle cx="27.600" cy="346.200" r="2.500" fill="none" stroke="#d3d3d3" stroke-width="1.200"/><path d="M25.600 338.200L14.300 344.600L15 345.700L20.500 344.200zM25.600 344.800L14.300 338.400L15 337.300L20.500 338.800z" fill="#d3d3d3"/><rect x="48.500" y="335.800" width="11.500" height="11" fill="none" stroke="#d3d3d3" stroke-width="1.300" stroke-dasharray="1.600 1.300"/><path d="M42.300 333.600V345.800L45.500 342.800L51.200 342z" fill="#d3d3d3" stroke="#535353" stroke-width=".5"/><path d="M63.2 350L63.2 347.4L60.6 350z" fill="#d3d3d3"/><defs><linearGradient id="gd1" x1="0" x2="1" y1="0" y2="0"><stop offset="0" stop-color="#303030"/><stop offset="1" stop-color="#ececec"/></linearGradient><linearGradient id="gd2" x1="0" x2="0" y1="0" y2="1"><stop offset="0" stop-color="#333" stop-opacity="0"/><stop offset="1" stop-color="#333" stop-opacity="1"/></linearGradient><linearGradient id="gd3" x1="0" x2="1" y1="0" y2="0"><stop offset="0" stop-color="#fff"/><stop offset=".45" stop-color="#e0e0e0"/><stop offset="1" stop-color="#1c1c1c"/></linearGradient></defs><rect x="14.500" y="358.500" width="14.800" height="13" fill="url(#gd1)" stroke="#d3d3d3" stroke-width="1.100"/><rect x="43.600" y="358.500" width="14.800" height="13" fill="#b4b4b4"/><rect x="43.8" y="359" width="2.900" height="3.200" fill="#6a6a6a"/><rect x="43.8" y="365.4" width="2.900" height="3.200" fill="#6a6a6a"/><rect x="46.7" y="362.2" width="2.900" height="3.200" fill="#6a6a6a"/><rect x="46.7" y="368.6" width="2.900" height="3.200" fill="#6a6a6a"/><rect x="49.6" y="359" width="2.900" height="3.200" fill="#6a6a6a"/><rect x="49.6" y="365.4" width="2.900" height="3.200" fill="#6a6a6a"/><rect x="52.5" y="362.2" width="2.900" height="3.200" fill="#6a6a6a"/><rect x="52.5" y="368.6" width="2.900" height="3.200" fill="#6a6a6a"/><rect x="55.4" y="359" width="2.900" height="3.200" fill="#6a6a6a"/><rect x="55.4" y="365.4" width="2.900" height="3.200" fill="#6a6a6a"/><rect x="43.600" y="358.500" width="14.800" height="13" fill="url(#gd2)" stroke="#d3d3d3" stroke-width="1.100"/><path d="M15.200 384.200H28.600V394L25 397.800H15.200z" fill="#d3d3d3"/><path d="M17.500 387.300H26.500M17.500 390.200H26.500M17.500 393.100H22.800" stroke="#535353" stroke-width="1.200"/><path d="M24.600 398V393.800H28.800" fill="none" stroke="#535353" stroke-width="1"/><path d="M44.200 398.300L43.600 396L51.500 387.300L54 389.800L45.600 398.100z" fill="none" stroke="#d3d3d3" stroke-width="1.200" stroke-linejoin="round"/><path d="M50.400 386.300L52 384.700L56.600 389.300L55 390.900z" fill="#d3d3d3"/><path d="M53.200 385.600L55.200 383.300a2.300 2.300 0 0 1 3.300 3.300L56.200 388.700z" fill="#d3d3d3"/><rect x="51.500" y="395.200" width="9.300" height="3.400" fill="none" stroke="#d3d3d3" stroke-width="1.200"/><path d="M54.600 395.200V398.600M57.700 395.200V398.600" stroke="#d3d3d3" stroke-width="1"/><path d="M63.6 400.8L63.6 398.2L61 400.8z" fill="#d3d3d3"/><path d="M18.500 421.800C16.500 418.800 15 417.200 13.800 415.600C14.800 414.500 16.300 415 17.500 416.400L17.200 409.800C17.200 408.500 18.900 408.500 19 409.800L19.600 413.800L20 408.200C20.100 406.900 21.900 406.900 21.900 408.200L22.100 413.700L23.400 408.800C23.700 407.600 25.400 407.900 25.200 409.200L24.500 414.300L26.600 411C27.300 410 28.800 410.800 28.200 412L26.300 417C25.900 419 25.600 420.300 24.800 421.800z" fill="#d3d3d3"/><circle cx="49.700" cy="413.900" r="5.700" fill="none" stroke="#d3d3d3" stroke-width="1.300"/><path d="M53.900 418.100L58.300 421.700" stroke="#d3d3d3" stroke-width="1.900"/><rect x="29.500" y="450.900" width="33.200" height="34" fill="#fff"/><rect x="38.500" y="460.200" width="15.400" height="15" fill="#4f5354"/><path d="M31.100 482.500L60.600 452.500" stroke="#e8131a" stroke-width="2.100"/><rect x="11.400" y="432.500" width="33.200" height="34" fill="#353d50" stroke="#aaa4b8" stroke-width="1"/><path d="M57.800 436.200C62 435.800 63.300 438.500 63.200 442" fill="none" stroke="#d3d3d3" stroke-width="1.700"/><path d="M55 436.400L58.600 433V439.600zM63.200 444.600L60 441H66.200z" fill="#d3d3d3"/><rect x="15.300" y="475.800" width="7.200" height="7.200" rx="1" fill="#0c0c0c" stroke="#d3d3d3" stroke-width="1"/><rect x="11.800" y="472.200" width="7.200" height="7.200" rx="1" fill="#fff" stroke="#d3d3d3" stroke-width="1"/><path d="M12.600 478.600L18.200 473" stroke="#e8131a" stroke-width="1"/><rect x="15.900" y="494.200" width="17.300" height="14.500" rx="2" fill="#2e2e2e"/><rect x="21.100" y="498.400" width="7" height="7" fill="#6b6b6b" stroke="#d3d3d3" stroke-width="1.100"/><path d="M43.400 499.500V497.900H51V499.500M47.200 497.900V506.400M45.600 506.400H48.800" fill="none" stroke="#d3d3d3" stroke-width="1.250"/><rect x="8.100" y="515.900" width="17.100" height="17.600" rx="2" fill="#2e2e2e"/><rect x="10.900" y="519" width="10.900" height="11" fill="#353d50" stroke="#d3d3d3" stroke-width="1"/><rect x="30.400" y="519" width="11.300" height="11" fill="url(#gd3)" stroke="#d3d3d3" stroke-width="1"/><rect x="50" y="519" width="11" height="11" fill="#fff" stroke="#d3d3d3" stroke-width=".8"/><path d="M50.800 529.200L60.300 519.700" stroke="#e8131a" stroke-width="1.600"/><path d="M63.6 532.8L63.6 530L60.8 532.8z" fill="#d3d3d3"/><rect x="20" y="550" width="8.400" height="5.600" fill="#c4c4c4" stroke="#d3d3d3" stroke-width=".8"/><path d="M18 547.500H29" stroke="#d3d3d3" stroke-width="1.800" stroke-dasharray="1.500 1.200"/><path d="M16.500 548V556" stroke="#d3d3d3" stroke-width="1.800" stroke-dasharray="1.500 1.200"/><rect x="8.100" y="569.200" width="27.100" height="21.800" rx="2.200" fill="#2e2e2e"/><rect x="17.300" y="575.100" width="10" height="10" fill="#8e8e8e" stroke="#d3d3d3" stroke-width="1.100"/><rect x="19.200" y="577" width="6.200" height="6.200" fill="#b0b0b0"/><ellipse cx="21.800" cy="579.600" rx="2.200" ry="1.500" fill="#151515"/><path d="M23 581.500L25.500 582.500" stroke="#eee" stroke-width="1"/><rect x="46.400" y="574.900" width="10.400" height="10.400" fill="#707070" stroke="#d3d3d3" stroke-width="1.100"/><rect x="46.400" y="574.900" width="10.400" height="2.700" fill="#d3d3d3"/><path d="M63.6 589.6L63.6 586.8L60.8 589.6z" fill="#d3d3d3"/></svg><div class="abs" style="left:71.5px;top:122.5px;width:1236.5px;height:15.8px;background:#1e1f1e"></div><div class="abs" style="left:71.5px;top:122.5px;width:15.5px;height:787.5px;background:#1e1f1e"></div><svg style="left:0px;top:0px;" width="1486" height="928" viewBox="2 38 1486 928" ><path d="M120.52 160.5V176.3M159.55 160.5V176.3M198.58 160.5V176.3M237.61 160.5V176.3M276.64 160.5V176.3M315.67 160.5V176.3M354.7 160.5V176.3M393.73 160.5V176.3M432.76 160.5V176.3M471.79 160.5V176.3M510.82 160.5V176.3M549.85 160.5V176.3M588.88 160.5V176.3M627.91 160.5V176.3M666.94 160.5V176.3M705.97 160.5V176.3M745 160.5V176.3M784.03 160.5V176.3M823.06 160.5V176.3M862.09 160.5V176.3M901.12 160.5V176.3M940.15 160.5V176.3M979.18 160.5V176.3M1018.21 160.5V176.3M1057.24 160.5V176.3M1096.27 160.5V176.3M1135.3 160.5V176.3M1174.33 160.5V176.3M1213.36 160.5V176.3M1252.39 160.5V176.3M1291.42 160.5V176.3M73.5 199.2H89M73.5 238.16H89M73.5 277.12H89M73.5 316.08H89M73.5 355.04H89M73.5 394H89M73.5 432.96H89M73.5 471.92H89M73.5 510.88H89M73.5 549.84H89M73.5 588.8H89M73.5 627.76H89M73.5 666.72H89M73.5 705.68H89M73.5 744.64H89M73.5 783.6H89M73.5 822.56H89M73.5 861.52H89M73.5 900.48H89M73.5 939.44H89" stroke="#707070" stroke-width="1" fill="none"/><path d="M97.1 171.8V176.3M104.91 171.8V176.3M112.71 171.8V176.3M128.33 171.8V176.3M136.13 171.8V176.3M143.94 171.8V176.3M151.74 171.8V176.3M167.36 171.8V176.3M175.16 171.8V176.3M182.97 171.8V176.3M190.77 171.8V176.3M206.39 171.8V176.3M214.19 171.8V176.3M222 171.8V176.3M229.8 171.8V176.3M245.42 171.8V176.3M253.22 171.8V176.3M261.03 171.8V176.3M268.83 171.8V176.3M284.45 171.8V176.3M292.25 171.8V176.3M300.06 171.8V176.3M307.86 171.8V176.3M323.48 171.8V176.3M331.28 171.8V176.3M339.09 171.8V176.3M346.89 171.8V176.3M362.51 171.8V176.3M370.31 171.8V176.3M378.12 171.8V176.3M385.92 171.8V176.3M401.54 171.8V176.3M409.34 171.8V176.3M417.15 171.8V176.3M424.95 171.8V176.3M440.57 171.8V176.3M448.37 171.8V176.3M456.18 171.8V176.3M463.98 171.8V176.3M479.6 171.8V176.3M487.4 171.8V176.3M495.21 171.8V176.3M503.01 171.8V176.3M518.63 171.8V176.3M526.43 171.8V176.3M534.24 171.8V176.3M542.04 171.8V176.3M557.66 171.8V176.3M565.46 171.8V176.3M573.27 171.8V176.3M581.07 171.8V176.3M596.69 171.8V176.3M604.49 171.8V176.3M612.3 171.8V176.3M620.1 171.8V176.3M635.72 171.8V176.3M643.52 171.8V176.3M651.33 171.8V176.3M659.13 171.8V176.3M674.75 171.8V176.3M682.55 171.8V176.3M690.36 171.8V176.3M698.16 171.8V176.3M713.78 171.8V176.3M721.58 171.8V176.3M729.39 171.8V176.3M737.19 171.8V176.3M752.81 171.8V176.3M760.61 171.8V176.3M768.42 171.8V176.3M776.22 171.8V176.3M791.84 171.8V176.3M799.64 171.8V176.3M807.45 171.8V176.3M815.25 171.8V176.3M830.87 171.8V176.3M838.67 171.8V176.3M846.48 171.8V176.3M854.28 171.8V176.3M869.9 171.8V176.3M877.7 171.8V176.3M885.51 171.8V176.3M893.31 171.8V176.3M908.93 171.8V176.3M916.73 171.8V176.3M924.54 171.8V176.3M932.34 171.8V176.3M947.96 171.8V176.3M955.76 171.8V176.3M963.57 171.8V176.3M971.37 171.8V176.3M986.99 171.8V176.3M994.79 171.8V176.3M1002.6 171.8V176.3M1010.4 171.8V176.3M1026.02 171.8V176.3M1033.82 171.8V176.3M1041.63 171.8V176.3M1049.43 171.8V176.3M1065.05 171.8V176.3M1072.85 171.8V176.3M1080.66 171.8V176.3M1088.46 171.8V176.3M1104.08 171.8V176.3M1111.88 171.8V176.3M1119.69 171.8V176.3M1127.49 171.8V176.3M1143.11 171.8V176.3M1150.91 171.8V176.3M1158.72 171.8V176.3M1166.52 171.8V176.3M1182.14 171.8V176.3M1189.94 171.8V176.3M1197.75 171.8V176.3M1205.55 171.8V176.3M1221.17 171.8V176.3M1228.97 171.8V176.3M1236.78 171.8V176.3M1244.58 171.8V176.3M1260.2 171.8V176.3M1268 171.8V176.3M1275.81 171.8V176.3M1283.61 171.8V176.3M1299.23 171.8V176.3M1307.03 171.8V176.3M84.5 183.62H89M84.5 191.41H89M84.5 206.99H89M84.5 214.78H89M84.5 222.58H89M84.5 230.37H89M84.5 245.95H89M84.5 253.74H89M84.5 261.54H89M84.5 269.33H89M84.5 284.91H89M84.5 292.7H89M84.5 300.5H89M84.5 308.29H89M84.5 323.87H89M84.5 331.66H89M84.5 339.46H89M84.5 347.25H89M84.5 362.83H89M84.5 370.62H89M84.5 378.42H89M84.5 386.21H89M84.5 401.79H89M84.5 409.58H89M84.5 417.38H89M84.5 425.17H89M84.5 440.75H89M84.5 448.54H89M84.5 456.34H89M84.5 464.13H89M84.5 479.71H89M84.5 487.5H89M84.5 495.3H89M84.5 503.09H89M84.5 518.67H89M84.5 526.46H89M84.5 534.26H89M84.5 542.05H89M84.5 557.63H89M84.5 565.42H89M84.5 573.22H89M84.5 581.01H89M84.5 596.59H89M84.5 604.38H89M84.5 612.18H89M84.5 619.97H89M84.5 635.55H89M84.5 643.34H89M84.5 651.14H89M84.5 658.93H89M84.5 674.51H89M84.5 682.3H89M84.5 690.1H89M84.5 697.89H89M84.5 713.47H89M84.5 721.26H89M84.5 729.06H89M84.5 736.85H89M84.5 752.43H89M84.5 760.22H89M84.5 768.02H89M84.5 775.81H89M84.5 791.39H89M84.5 799.18H89M84.5 806.98H89M84.5 814.77H89M84.5 830.35H89M84.5 838.14H89M84.5 845.94H89M84.5 853.73H89M84.5 869.31H89M84.5 877.1H89M84.5 884.9H89M84.5 892.69H89M84.5 908.27H89M84.5 916.06H89M84.5 923.86H89M84.5 931.65H89" stroke="#8a8a8a" stroke-width="1" fill="none"/><path d="M93.2 173.8V176.3M101.01 173.8V176.3M108.81 173.8V176.3M116.62 173.8V176.3M124.42 173.8V176.3M132.23 173.8V176.3M140.04 173.8V176.3M147.84 173.8V176.3M155.65 173.8V176.3M163.45 173.8V176.3M171.26 173.8V176.3M179.07 173.8V176.3M186.87 173.8V176.3M194.68 173.8V176.3M202.48 173.8V176.3M210.29 173.8V176.3M218.1 173.8V176.3M225.9 173.8V176.3M233.71 173.8V176.3M241.51 173.8V176.3M249.32 173.8V176.3M257.12 173.8V176.3M264.93 173.8V176.3M272.74 173.8V176.3M280.54 173.8V176.3M288.35 173.8V176.3M296.16 173.8V176.3M303.96 173.8V176.3M311.77 173.8V176.3M319.57 173.8V176.3M327.38 173.8V176.3M335.19 173.8V176.3M342.99 173.8V176.3M350.8 173.8V176.3M358.6 173.8V176.3M366.41 173.8V176.3M374.22 173.8V176.3M382.02 173.8V176.3M389.83 173.8V176.3M397.63 173.8V176.3M405.44 173.8V176.3M413.25 173.8V176.3M421.05 173.8V176.3M428.86 173.8V176.3M436.66 173.8V176.3M444.47 173.8V176.3M452.27 173.8V176.3M460.08 173.8V176.3M467.89 173.8V176.3M475.69 173.8V176.3M483.5 173.8V176.3M491.31 173.8V176.3M499.11 173.8V176.3M506.92 173.8V176.3M514.72 173.8V176.3M522.53 173.8V176.3M530.34 173.8V176.3M538.14 173.8V176.3M545.95 173.8V176.3M553.75 173.8V176.3M561.56 173.8V176.3M569.37 173.8V176.3M577.17 173.8V176.3M584.98 173.8V176.3M592.78 173.8V176.3M600.59 173.8V176.3M608.39 173.8V176.3M616.2 173.8V176.3M624.01 173.8V176.3M631.81 173.8V176.3M639.62 173.8V176.3M647.42 173.8V176.3M655.23 173.8V176.3M663.04 173.8V176.3M670.84 173.8V176.3M678.65 173.8V176.3M686.46 173.8V176.3M694.26 173.8V176.3M702.07 173.8V176.3M709.87 173.8V176.3M717.68 173.8V176.3M725.49 173.8V176.3M733.29 173.8V176.3M741.1 173.8V176.3M748.9 173.8V176.3M756.71 173.8V176.3M764.52 173.8V176.3M772.32 173.8V176.3M780.13 173.8V176.3M787.93 173.8V176.3M795.74 173.8V176.3M803.55 173.8V176.3M811.35 173.8V176.3M819.16 173.8V176.3M826.96 173.8V176.3M834.77 173.8V176.3M842.58 173.8V176.3M850.38 173.8V176.3M858.19 173.8V176.3M865.99 173.8V176.3M873.8 173.8V176.3M881.61 173.8V176.3M889.41 173.8V176.3M897.22 173.8V176.3M905.02 173.8V176.3M912.83 173.8V176.3M920.63 173.8V176.3M928.44 173.8V176.3M936.25 173.8V176.3M944.05 173.8V176.3M951.86 173.8V176.3M959.66 173.8V176.3M967.47 173.8V176.3M975.28 173.8V176.3M983.08 173.8V176.3M990.89 173.8V176.3M998.69 173.8V176.3M1006.5 173.8V176.3M1014.31 173.8V176.3M1022.11 173.8V176.3M1029.92 173.8V176.3M1037.72 173.8V176.3M1045.53 173.8V176.3M1053.34 173.8V176.3M1061.14 173.8V176.3M1068.95 173.8V176.3M1076.76 173.8V176.3M1084.56 173.8V176.3M1092.37 173.8V176.3M1100.17 173.8V176.3M1107.98 173.8V176.3M1115.79 173.8V176.3M1123.59 173.8V176.3M1131.4 173.8V176.3M1139.2 173.8V176.3M1147.01 173.8V176.3M1154.82 173.8V176.3M1162.62 173.8V176.3M1170.43 173.8V176.3M1178.23 173.8V176.3M1186.04 173.8V176.3M1193.85 173.8V176.3M1201.65 173.8V176.3M1209.46 173.8V176.3M1217.26 173.8V176.3M1225.07 173.8V176.3M1232.88 173.8V176.3M1240.68 173.8V176.3M1248.49 173.8V176.3M1256.29 173.8V176.3M1264.1 173.8V176.3M1271.9 173.8V176.3M1279.71 173.8V176.3M1287.52 173.8V176.3M1295.32 173.8V176.3M1303.13 173.8V176.3M86.5 179.72H89M86.5 187.51H89M86.5 195.3H89M86.5 203.1H89M86.5 210.89H89M86.5 218.68H89M86.5 226.47H89M86.5 234.26H89M86.5 242.06H89M86.5 249.85H89M86.5 257.64H89M86.5 265.43H89M86.5 273.22H89M86.5 281.02H89M86.5 288.81H89M86.5 296.6H89M86.5 304.39H89M86.5 312.18H89M86.5 319.98H89M86.5 327.77H89M86.5 335.56H89M86.5 343.35H89M86.5 351.14H89M86.5 358.94H89M86.5 366.73H89M86.5 374.52H89M86.5 382.31H89M86.5 390.1H89M86.5 397.9H89M86.5 405.69H89M86.5 413.48H89M86.5 421.27H89M86.5 429.06H89M86.5 436.86H89M86.5 444.65H89M86.5 452.44H89M86.5 460.23H89M86.5 468.02H89M86.5 475.82H89M86.5 483.61H89M86.5 491.4H89M86.5 499.19H89M86.5 506.98H89M86.5 514.78H89M86.5 522.57H89M86.5 530.36H89M86.5 538.15H89M86.5 545.94H89M86.5 553.74H89M86.5 561.53H89M86.5 569.32H89M86.5 577.11H89M86.5 584.9H89M86.5 592.7H89M86.5 600.49H89M86.5 608.28H89M86.5 616.07H89M86.5 623.86H89M86.5 631.66H89M86.5 639.45H89M86.5 647.24H89M86.5 655.03H89M86.5 662.82H89M86.5 670.62H89M86.5 678.41H89M86.5 686.2H89M86.5 693.99H89M86.5 701.78H89M86.5 709.58H89M86.5 717.37H89M86.5 725.16H89M86.5 732.95H89M86.5 740.74H89M86.5 748.54H89M86.5 756.33H89M86.5 764.12H89M86.5 771.91H89M86.5 779.7H89M86.5 787.5H89M86.5 795.29H89M86.5 803.08H89M86.5 810.87H89M86.5 818.66H89M86.5 826.46H89M86.5 834.25H89M86.5 842.04H89M86.5 849.83H89M86.5 857.62H89M86.5 865.42H89M86.5 873.21H89M86.5 881H89M86.5 888.79H89M86.5 896.58H89M86.5 904.38H89M86.5 912.17H89M86.5 919.96H89M86.5 927.75H89M86.5 935.54H89M86.5 943.34H89" stroke="#777" stroke-width="1" fill="none"/><path d="M89 176.1H1310" stroke="#6c6c6c" stroke-width="1"/><path d="M88.8 176.3V948" stroke="#6c6c6c" stroke-width="1"/><path d="M73.5 165H88M78 160.500V176" stroke="#cfcfcf" stroke-width="1" stroke-dasharray="1 1.200" fill="none"/><path d="M88.5 160.500V176" stroke="#6f6f6f" stroke-width="1"/></svg><div class="rl" style="left:88.2px;top:125.1px;">0</div><div class="rl" style="left:355.3px;top:125.1px;">5</div><div class="rl" style="left:394.33px;top:125.1px;">10</div><div class="rl" style="left:433.36px;top:125.1px;">15</div><div class="rl" style="left:472.39px;top:125.1px;">20</div><div class="rl" style="left:511.42px;top:125.1px;">25</div><div class="rl" style="left:550.45px;top:125.1px;">30</div><div class="rl" style="left:589.48px;top:125.1px;">35</div><div class="rl" style="left:628.51px;top:125.1px;">40</div><div class="rl" style="left:667.54px;top:125.1px;">45</div><div class="rl" style="left:706.57px;top:125.1px;">50</div><div class="rl" style="left:745.6px;top:125.1px;">55</div><div class="rl" style="left:784.63px;top:125.1px;">60</div><div class="rl" style="left:823.66px;top:125.1px;">65</div><div class="rl" style="left:862.69px;top:125.1px;">70</div><div class="rl" style="left:901.72px;top:125.1px;">75</div><div class="rl" style="left:940.75px;top:125.1px;">80</div><div class="rl" style="left:979.78px;top:125.1px;">85</div><div class="rl" style="left:1018.81px;top:125.1px;">90</div><div class="rl" style="left:1057.84px;top:125.1px;">95</div><div class="rl" style="left:1096.87px;top:125.1px;">100</div><div class="rl" style="left:1135.9px;top:125.1px;">105</div><div class="rl" style="left:1174.93px;top:125.1px;">110</div><div class="rl" style="left:1213.96px;top:125.1px;">115</div><div class="rl" style="left:1252.99px;top:125.1px;">120</div><div class="rl" style="left:1292.02px;top:125.1px;">125</div><div class="rv" style="left:74.1px;top:124.14px;">3</div><div class="rv" style="left:74.1px;top:132.74px;">0</div><div class="rv" style="left:74.1px;top:163.1px;">2</div><div class="rv" style="left:74.1px;top:171.7px;">5</div><div class="rv" style="left:74.1px;top:202.06px;">2</div><div class="rv" style="left:74.1px;top:210.66px;">0</div><div class="rv" style="left:74.1px;top:241.02px;">1</div><div class="rv" style="left:74.1px;top:249.62px;">5</div><div class="rv" style="left:74.1px;top:279.98px;">1</div><div class="rv" style="left:74.1px;top:288.58px;">0</div><div class="rv" style="left:74.1px;top:318.94px;">5</div><div class="rv" style="left:74.1px;top:357.9px;">0</div><div class="rv" style="left:74.1px;top:396.86px;">5</div><div class="rv" style="left:74.1px;top:435.82px;">1</div><div class="rv" style="left:74.1px;top:444.42px;">0</div><div class="rv" style="left:74.1px;top:474.78px;">1</div><div class="rv" style="left:74.1px;top:483.38px;">5</div><div class="rv" style="left:74.1px;top:513.74px;">2</div><div class="rv" style="left:74.1px;top:522.34px;">0</div><div class="rv" style="left:74.1px;top:552.7px;">2</div><div class="rv" style="left:74.1px;top:561.3px;">5</div><div class="rv" style="left:74.1px;top:591.66px;">3</div><div class="rv" style="left:74.1px;top:600.26px;">0</div><div class="rv" style="left:74.1px;top:630.62px;">3</div><div class="rv" style="left:74.1px;top:639.22px;">5</div><div class="rv" style="left:74.1px;top:669.58px;">4</div><div class="rv" style="left:74.1px;top:678.18px;">0</div><div class="rv" style="left:74.1px;top:708.54px;">4</div><div class="rv" style="left:74.1px;top:717.14px;">5</div><div class="rv" style="left:74.1px;top:747.5px;">5</div><div class="rv" style="left:74.1px;top:756.1px;">0</div><div class="rv" style="left:74.1px;top:786.46px;">5</div><div class="rv" style="left:74.1px;top:795.06px;">5</div><div class="rv" style="left:74.1px;top:825.42px;">6</div><div class="rv" style="left:74.1px;top:834.02px;">0</div><div class="rv" style="left:74.1px;top:864.38px;">6</div><div class="rv" style="left:74.1px;top:872.98px;">5</div><div class="rv" style="left:74.1px;top:903.34px;">7</div><div class="rv" style="left:74.1px;top:911.94px;">0</div><div class="abs" style="left:71.5px;top:122.5px;width:15px;height:15.7px;background:#1e1f1e"></div><svg style="left:0px;top:0px;" width="1486" height="928" viewBox="2 38 1486 928" ><path d="M73.500 165.500H88M78.400 160.500V176" stroke="#cfcfcf" stroke-width="1" stroke-dasharray="1 1.100" fill="none"/><path d="M88.500 160.500V176" stroke="#6f6f6f" stroke-width="1"/><path d="M73.500 176.200H89" stroke="#6c6c6c" stroke-width="1"/></svg><div class="abs" style="left:87.3px;top:138.5px;width:1220.7px;height:771.5px;background:#5e5e5e"></div><div class="abs" style="left:314.4px;top:356px;width:421px;height:428.6px;background:#fff"></div><div class="abs" style="left:316.2px;top:784.4px;width:419.2px;height:1.9px;background:#0a0a0a"></div><div class="abs" style="left:735.2px;top:332.4px;width:304px;height:476px;background:#353d50"></div><div class="abs" style="left:817.4px;top:332.4px;width:117.6px;height:62px;background:#5b98c2"></div><svg style="left:0px;top:0px;" width="1486" height="928" viewBox="2 38 1486 928" ><rect x="292.500" y="370.400" width="749.200" height="476" fill="none" stroke="#c2555b" stroke-width="1"/><path d="M737.5 393.800H1019.3V822.500H737.500" fill="none" stroke="#424a5d" stroke-width="1"/><path d="M819.4 393.800H937" fill="none" stroke="#5188b0" stroke-width="1"/><path d="M737.5 370.400V846.400" fill="none" stroke="#5274ad" stroke-width="1"/><path d="M737.5 432.300H355V784.300H737.500" fill="none" stroke="#e4b4d6" stroke-width="1"/><path d="M355 432.300V784.300" fill="none" stroke="#cfcef2" stroke-width="1.100"/><path d="M737.5 432.300H979.300V784.300H737.500" fill="none" stroke="#96699e" stroke-width="1"/><path d="M583 609.400H681.500V761.600H637.600" fill="none" stroke="#8faadc" stroke-width="1"/><path d="M369 626.7H681" stroke="#dcdcdc" stroke-width="1.200" stroke-dasharray="3 .7 1.500 .7" fill="none"/><path d="M369 653.7H681" stroke="#dcdcdc" stroke-width="1.200" stroke-dasharray="3 .7 1.500 .7" fill="none"/><path d="M369 680.7H681" stroke="#dcdcdc" stroke-width="1.200" stroke-dasharray="3 .7 1.500 .7" fill="none"/><path d="M369 708.5H681" stroke="#dcdcdc" stroke-width="1.200" stroke-dasharray="3 .7 1.500 .7" fill="none"/><path d="M369 735.5H681" stroke="#dcdcdc" stroke-width="1.200" stroke-dasharray="3 .7 1.500 .7" fill="none"/><path d="M369 763.2H681" stroke="#dcdcdc" stroke-width="1.200" stroke-dasharray="3 .7 1.500 .7" fill="none"/><path d="M819.4 763.400H937" stroke="#5b98c2" stroke-width="1.200"/></svg><svg style="left:366.3px;top:426.1px;" width="32.3" height="32.3" viewBox="0 0 32.3 32.3" ><rect x="0" y="0" width="32.300" height="32.300" fill="#fff" stroke="#a6bbe6" stroke-width=".9"/><circle cx="2.5" cy="2.7" r="1.650" fill="#9b9b9b"/><circle cx="2.5" cy="8.04" r="1.650" fill="#9b9b9b"/><circle cx="2.5" cy="13.38" r="1.650" fill="#9b9b9b"/><circle cx="2.5" cy="18.72" r="1.650" fill="#9b9b9b"/><circle cx="2.5" cy="24.06" r="1.650" fill="#9b9b9b"/><circle cx="2.5" cy="29.4" r="1.650" fill="#9b9b9b"/><circle cx="7.84" cy="2.7" r="1.650" fill="#9b9b9b"/><circle cx="7.84" cy="8.04" r="1.650" fill="#9b9b9b"/><circle cx="7.84" cy="13.38" r="1.650" fill="#2380b6"/><circle cx="7.84" cy="18.72" r="1.650" fill="#2380b6"/><circle cx="7.84" cy="24.06" r="1.650" fill="#9b9b9b"/><circle cx="7.84" cy="29.4" r="1.650" fill="#9b9b9b"/><circle cx="13.18" cy="2.7" r="1.650" fill="#9b9b9b"/><circle cx="13.18" cy="8.04" r="1.650" fill="#2380b6"/><circle cx="13.18" cy="13.38" r="1.650" fill="#2380b6"/><circle cx="13.18" cy="18.72" r="1.650" fill="#2380b6"/><circle cx="13.18" cy="24.06" r="1.650" fill="#2380b6"/><circle cx="13.18" cy="29.4" r="1.650" fill="#9b9b9b"/><circle cx="18.52" cy="2.7" r="1.650" fill="#9b9b9b"/><circle cx="18.52" cy="8.04" r="1.650" fill="#2380b6"/><circle cx="18.52" cy="13.38" r="1.650" fill="#2380b6"/><circle cx="18.52" cy="18.72" r="1.650" fill="#2380b6"/><circle cx="18.52" cy="24.06" r="1.650" fill="#2380b6"/><circle cx="18.52" cy="29.4" r="1.650" fill="#9b9b9b"/><circle cx="23.86" cy="2.7" r="1.650" fill="#9b9b9b"/><circle cx="23.86" cy="8.04" r="1.650" fill="#9b9b9b"/><circle cx="23.86" cy="13.38" r="1.650" fill="#2380b6"/><circle cx="23.86" cy="18.72" r="1.650" fill="#2380b6"/><circle cx="23.86" cy="24.06" r="1.650" fill="#9b9b9b"/><circle cx="23.86" cy="29.4" r="1.650" fill="#9b9b9b"/><circle cx="29.2" cy="2.7" r="1.650" fill="#9b9b9b"/><circle cx="29.2" cy="8.04" r="1.650" fill="#9b9b9b"/><circle cx="29.2" cy="13.38" r="1.650" fill="#9b9b9b"/><circle cx="29.2" cy="18.72" r="1.650" fill="#9b9b9b"/><circle cx="29.2" cy="24.06" r="1.650" fill="#9b9b9b"/><circle cx="29.2" cy="29.4" r="1.650" fill="#9b9b9b"/><path d="M13.18 8.04L13.18 13.38L7.84 13.38" fill="none" stroke="#2380b6" stroke-width="1.700"/><path d="M18.52 8.04L18.52 13.38L23.86 13.38" fill="none" stroke="#2380b6" stroke-width="1.700"/><path d="M7.84 18.72L13.18 18.72L13.18 24.06" fill="none" stroke="#2380b6" stroke-width="1.700"/><path d="M23.86 18.72L18.52 18.72L18.52 24.06" fill="none" stroke="#2380b6" stroke-width="1.700"/></svg><div class="abs" style="left:406.4px;top:426.2px;width:100.2px;height:17.8px;border:1px solid #a9bfe6"></div><div class="t" style="left:407.4px;top:426.9px;font-size:16.4px;color:#161616">天爱体检中心</div><div class="abs" style="left:406.4px;top:447px;width:175px;height:12.2px;border:1px solid #a9bfe6"></div><div class="t" style="left:407.6px;top:449px;font-size:10.3px;color:#161616;letter-spacing:.25px;-webkit-text-stroke:.25px #161616">TIANAI Medical Examination Center</div><svg style="left:0px;top:0px;filter:blur(.35px)" width="1486" height="928" viewBox="2 38 1486 928" ><rect x="369.1" y="607.5" width="14.97" height="12.4" fill="#bfc2c7"/><rect x="383.82" y="607.5" width="14.97" height="12.4" fill="#bfc2c7"/><rect x="398.54" y="607.5" width="5.71" height="12.4" fill="#b0b2b6"/><rect x="413.26" y="607.5" width="14.97" height="12.4" fill="#bcc0c6"/><rect x="427.98" y="607.5" width="14.97" height="12.4" fill="#bcc0c6"/><rect x="442.7" y="607.5" width="14.97" height="12.4" fill="#b0b2b6"/><rect x="457.42" y="607.5" width="14.97" height="12.4" fill="#a9abaf"/><rect x="472.14" y="607.5" width="14.97" height="12.4" fill="#bfc1c6"/><rect x="486.86" y="607.5" width="14.97" height="12.4" fill="#b8bbc0"/><rect x="501.58" y="607.5" width="14.97" height="12.4" fill="#b0b2b6"/><rect x="516.3" y="607.5" width="14.97" height="12.4" fill="#c9ccd1"/><rect x="531.02" y="607.5" width="14.97" height="12.4" fill="#a9abb0"/><rect x="545.74" y="607.5" width="14.97" height="12.4" fill="#d5d7db"/><rect x="560.46" y="607.5" width="14.97" height="12.4" fill="#c0c3c8"/><rect x="575.18" y="607.5" width="8.07" height="12.4" fill="#eef1f8"/><rect x="404" y="607.5" width="9.300" height="12.4" fill="#eef1f8"/><rect x="369.1" y="619.9" width="14.97" height="4.1" fill="#f0f0f2"/><rect x="383.82" y="619.9" width="14.97" height="4.1" fill="#f4f4f5"/><rect x="398.54" y="619.9" width="5.71" height="4.1" fill="#f6f6f7"/><rect x="413.26" y="619.9" width="14.97" height="4.1" fill="#f0f0f2"/><rect x="427.98" y="619.9" width="14.97" height="4.1" fill="#f4f4f5"/><rect x="442.7" y="619.9" width="14.97" height="4.1" fill="#f0f0f1"/><rect x="457.42" y="619.9" width="14.97" height="4.1" fill="#efeff0"/><rect x="472.14" y="619.9" width="14.97" height="4.1" fill="#f0f0f1"/><rect x="486.86" y="619.9" width="14.97" height="4.1" fill="#f0f0f1"/><rect x="501.58" y="619.9" width="14.97" height="4.1" fill="#efeff0"/><rect x="516.3" y="619.9" width="14.97" height="4.1" fill="#f6f6f7"/><rect x="531.02" y="619.9" width="14.97" height="4.1" fill="#ececee"/><rect x="545.74" y="619.9" width="14.97" height="4.1" fill="#f8f8f9"/><rect x="560.46" y="619.9" width="14.97" height="4.1" fill="#f0f0f2"/><rect x="575.18" y="619.9" width="8.07" height="4.1" fill="#fbfcfe"/><rect x="404" y="619.9" width="9.300" height="4.1" fill="#fbfcfe"/><rect x="369.1" y="634.3" width="14.97" height="14.4" fill="#d0d0d0"/><rect x="383.82" y="634.3" width="14.97" height="14.4" fill="#c8c8c8"/><rect x="398.54" y="634.3" width="5.71" height="14.4" fill="#e8e8e8"/><rect x="413.26" y="634.3" width="14.97" height="14.4" fill="#cacaca"/><rect x="427.98" y="634.3" width="14.97" height="14.4" fill="#c8c8c8"/><rect x="442.7" y="634.3" width="14.97" height="14.4" fill="#eeeeec"/><rect x="457.42" y="634.3" width="14.97" height="14.4" fill="#d4d4d4"/><rect x="472.14" y="634.3" width="14.97" height="14.4" fill="#d0d0d0"/><rect x="486.86" y="634.3" width="14.97" height="14.4" fill="#c4c4c4"/><rect x="501.58" y="634.3" width="14.97" height="14.4" fill="#d8d8d8"/><rect x="516.3" y="634.3" width="12.35" height="14.4" fill="#f4f4f4"/><rect x="404" y="634.3" width="9.300" height="14.4" fill="#ececec"/><rect x="369.1" y="664.2" width="14.97" height="13.5" fill="#d4d4d4"/><rect x="383.82" y="664.2" width="14.97" height="13.5" fill="#d6d6d6"/><rect x="398.54" y="664.2" width="5.71" height="13.5" fill="#cccccc"/><rect x="413.26" y="664.2" width="14.97" height="13.5" fill="#d2d2d2"/><rect x="427.98" y="664.2" width="14.97" height="13.5" fill="#d4d4d4"/><rect x="442.7" y="664.2" width="14.97" height="13.5" fill="#cccccc"/><rect x="457.42" y="664.2" width="14.97" height="13.5" fill="#d2d2d2"/><rect x="472.14" y="664.2" width="14.97" height="13.5" fill="#dadada"/><rect x="486.86" y="664.2" width="14.97" height="13.5" fill="#d8d8d8"/><rect x="501.58" y="664.2" width="14.97" height="13.5" fill="#c8c8c8"/><rect x="516.3" y="664.2" width="14.97" height="13.5" fill="#c8c8c8"/><rect x="531.02" y="664.2" width="14.97" height="13.5" fill="#c8c8c8"/><rect x="545.74" y="664.2" width="14.97" height="13.5" fill="#e0e0dc"/><rect x="560.46" y="664.2" width="14.97" height="13.5" fill="#d4d4d4"/><rect x="575.18" y="664.2" width="14.07" height="13.5" fill="#e8e8e8"/><rect x="406.600" y="664.200" width="6.600" height="13.500" fill="#f1f1f1"/><rect x="369.1" y="693.2" width="14.97" height="11.5" fill="#d8d8d8"/><rect x="383.82" y="693.2" width="14.97" height="11.5" fill="#cacaca"/><rect x="398.54" y="693.2" width="5.71" height="11.5" fill="#d0d0d0"/><rect x="413.26" y="693.2" width="14.97" height="11.5" fill="#d8d8d8"/><rect x="427.98" y="693.2" width="14.97" height="11.5" fill="#cccccc"/><rect x="442.7" y="693.2" width="14.97" height="11.5" fill="#d0d0d0"/><rect x="457.42" y="693.2" width="14.97" height="11.5" fill="#d4d4d4"/><rect x="472.14" y="693.2" width="14.97" height="11.5" fill="#eeeeee"/><rect x="369.1" y="717" width="14.97" height="5.2" fill="#f0f0f0"/><rect x="383.82" y="717" width="14.97" height="5.2" fill="#f1f1f1"/><rect x="398.54" y="717" width="5.71" height="5.2" fill="#f5f5f5"/><rect x="413.26" y="717" width="14.97" height="5.2" fill="#efefef"/><rect x="427.98" y="717" width="14.97" height="5.2" fill="#f0f0f0"/><rect x="442.7" y="717" width="14.97" height="5.2" fill="#f6f6f6"/><rect x="457.42" y="717" width="14.97" height="5.2" fill="#f0f0f0"/><rect x="472.14" y="717" width="14.97" height="5.2" fill="#f0f0f0"/><rect x="486.86" y="717" width="14.97" height="5.2" fill="#f0f0f0"/><rect x="501.58" y="717" width="14.97" height="5.2" fill="#f2f2f2"/><rect x="404" y="717" width="9.300" height="5.2" fill="#fafafa"/><rect x="369.1" y="722.2" width="14.97" height="13.1" fill="#dcdcdc"/><rect x="383.82" y="722.2" width="14.97" height="13.1" fill="#e2e2e0"/><rect x="398.54" y="722.2" width="5.71" height="13.1" fill="#e8e8e8"/><rect x="413.26" y="722.2" width="14.97" height="13.1" fill="#d6d6d6"/><rect x="427.98" y="722.2" width="14.97" height="13.1" fill="#e0e0de"/><rect x="442.7" y="722.2" width="14.97" height="13.1" fill="#e4e4e2"/><rect x="457.42" y="722.2" width="14.97" height="13.1" fill="#dadada"/><rect x="472.14" y="722.2" width="14.97" height="13.1" fill="#dcdcdc"/><rect x="486.86" y="722.2" width="14.97" height="13.1" fill="#d2d2d2"/><rect x="501.58" y="722.2" width="14.97" height="13.1" fill="#e0e0de"/><rect x="404" y="722.2" width="9.300" height="13.1" fill="#f6f6f6"/><rect x="369.1" y="743.3" width="14.97" height="8.7" fill="#f6f6f6"/><rect x="383.82" y="743.3" width="14.97" height="8.7" fill="#f7f7f7"/><rect x="398.54" y="743.3" width="5.71" height="8.7" fill="#f4f4f4"/><rect x="413.26" y="743.3" width="14.97" height="8.7" fill="#f5f5f5"/><rect x="427.98" y="743.3" width="14.97" height="8.7" fill="#f6f6f6"/><rect x="442.7" y="743.3" width="14.97" height="8.7" fill="#f4f4f4"/><rect x="457.42" y="743.3" width="14.97" height="8.7" fill="#f3f3f3"/><rect x="472.14" y="743.3" width="14.97" height="8.7" fill="#f5f5f5"/><rect x="486.86" y="743.3" width="14.97" height="8.7" fill="#f6f6f6"/><rect x="501.58" y="743.3" width="14.97" height="8.7" fill="#f5f5f5"/><rect x="516.3" y="743.3" width="14.97" height="8.7" fill="#f6f6f6"/><rect x="531.02" y="743.3" width="14.97" height="8.7" fill="#f1f1f1"/><rect x="545.74" y="743.3" width="14.97" height="8.7" fill="#f3f3f3"/><rect x="560.46" y="743.3" width="14.97" height="8.7" fill="#f6f6f6"/><rect x="575.18" y="743.3" width="14.97" height="8.7" fill="#f6f6f6"/><rect x="589.9" y="743.3" width="14.97" height="8.7" fill="#f8f8f8"/><rect x="604.62" y="743.3" width="14.97" height="8.7" fill="#f6f6f6"/><rect x="619.34" y="743.3" width="14.97" height="8.7" fill="#f4f4f4"/><rect x="369.1" y="752" width="14.97" height="9.1" fill="#bcc0c8"/><rect x="383.82" y="752" width="14.97" height="9.1" fill="#c4c7ce"/><rect x="398.54" y="752" width="5.71" height="9.1" fill="#c0c3c9"/><rect x="413.26" y="752" width="14.97" height="9.1" fill="#b8bcc6"/><rect x="427.98" y="752" width="14.97" height="9.1" fill="#c2c5cc"/><rect x="442.7" y="752" width="14.97" height="9.1" fill="#cccfd6"/><rect x="457.42" y="752" width="14.97" height="9.1" fill="#c8ccd4"/><rect x="472.14" y="752" width="14.97" height="9.1" fill="#b8bcc4"/><rect x="486.86" y="752" width="14.97" height="9.1" fill="#cdd2dc"/><rect x="501.58" y="752" width="14.97" height="9.1" fill="#c8cbd2"/><rect x="516.3" y="752" width="14.97" height="9.1" fill="#c2c5cc"/><rect x="531.02" y="752" width="14.97" height="9.1" fill="#cfd3da"/><rect x="545.74" y="752" width="14.97" height="9.1" fill="#c0c4cb"/><rect x="560.46" y="752" width="14.97" height="9.1" fill="#c0c4cb"/><rect x="575.18" y="752" width="14.97" height="9.1" fill="#d9dce3"/><rect x="589.9" y="752" width="14.97" height="9.1" fill="#c2c5cc"/><rect x="604.62" y="752" width="14.97" height="9.1" fill="#d0d3da"/><rect x="619.34" y="752" width="14.97" height="9.1" fill="#d4d7dd"/><rect x="404" y="752" width="9.300" height="9.1" fill="#e4e8f2"/><rect x="635" y="752" width="2.5" height="9.1" fill="#eef1f8"/></svg><div class="abs" style="left:811.2px;top:401.9px;width:131.700px;height:130px;overflow:hidden;background:#3a4357"><svg style="left:0;top:0;filter:blur(6.500px)" width="131.700" height="130" viewBox="813.200 439.900 131.700 130"><rect x="826" y="454" width="103" height="97" rx="6" fill="#959baa"/><circle cx="837.2" cy="463.9" r="9" fill="#c6cad2"/><circle cx="917.5" cy="463.9" r="9" fill="#c6cad2"/><circle cx="892.7" cy="494.5" r="10" fill="#c6cad2"/><circle cx="869.5" cy="522.7" r="10" fill="#c6cad2"/><circle cx="896" cy="536" r="10" fill="#c6cad2"/><circle cx="837.2" cy="540.9" r="9" fill="#c6cad2"/><circle cx="915.9" cy="517.7" r="8" fill="#c6cad2"/><circle cx="833" cy="512.7" r="7" fill="#c6cad2"/><circle cx="858" cy="487" r="6" fill="#c6cad2"/><circle cx="866" cy="476" r="6" fill="#c6cad2"/><circle cx="850" cy="497" r="6" fill="#c6cad2"/><circle cx="880" cy="540" r="7" fill="#c6cad2"/><circle cx="908" cy="548" r="6" fill="#c6cad2"/><circle cx="879.5" cy="469.7" r="8" fill="#737b8d"/><circle cx="839.7" cy="487.9" r="8" fill="#737b8d"/><circle cx="902.6" cy="511" r="8" fill="#737b8d"/><circle cx="854.6" cy="534" r="6" fill="#737b8d"/><circle cx="880" cy="505" r="5" fill="#737b8d"/><circle cx="925" cy="490" r="5" fill="#737b8d"/><circle cx="832" cy="444" r="7" fill="#5f80ad"/></svg></div><div class="abs" style="left:843px;top:672.2px;width:67px;height:22px;border:1px solid #4f6b98"></div><div class="t" style="left:844.2px;top:673.6px;font-size:20.6px;font-weight:bold;color:#fff;letter-spacing:.9px">张小明</div><div class="abs" style="left:843px;top:699.2px;width:67px;height:14.8px;border:1px solid #4f6b98"></div><div class="t" style="left:844px;top:700.3px;font-size:13px;color:#fff">健康咨询师</div><div class="abs" style="left:1307.3px;top:122.5px;width:16.5px;height:16px;background:#535353"></div><div class="abs" style="left:1307.3px;top:138.5px;width:14.3px;height:771.5px;background:#4a4a4a"></div><div class="abs" style="left:1307.9px;top:139.3px;width:13.2px;height:318.8px;background:#6b6d6c;border-radius:6.600px"></div><div class="abs" style="left:1321.8px;top:93.5px;width:3.3px;height:835px;background:#3c3c3c"></div><div class="abs" style="left:1325.2px;top:94px;width:161px;height:11.3px;background:#444"></div><div class="abs" style="left:1325.2px;top:105.3px;width:161px;height:823px;background:#535353"></div><svg style="left:0px;top:0px;" width="1486" height="928" viewBox="2 38 1486 928" ><path d="M1327.200 239.200H1488M1327.200 335.800H1488" stroke="#3c3c3c" stroke-width="1.400"/><path d="M1397 149H1416.500M1397 244.800H1416.500" stroke="#3e3e3e" stroke-width="3.600" stroke-dasharray="1.200 .9"/><path d="M1478.300 135.200L1475.800 137.700L1478.300 140.200M1482.300 135.200L1479.800 137.700L1482.300 140.200" fill="none" stroke="#cfcfcf" stroke-width="1.100"/><path d="M1337.300 164.200L1340.500 161H1344.300V173.800H1337.300zM1354.400 164.200L1351.200 161H1347.200V173.800H1354.400z" fill="#d3d3d3"/><path d="M1345.700 157.900V177" stroke="#d3d3d3" stroke-width="1.100"/><path d="M1345.800 186.800L1353.800 192.600L1345.800 198.400L1337.900 192.600z" fill="#d3d3d3"/><path d="M1337.900 197.400L1340.300 195.700L1345.800 199.700L1351.400 195.700L1353.800 197.400L1345.800 204z" fill="#d3d3d3"/><rect x="1337" y="218.800" width="10.600" height="6.400" rx="3.200" fill="none" stroke="#d3d3d3" stroke-width="1.900"/><rect x="1343.800" y="218.800" width="10.600" height="6.400" rx="3.200" fill="none" stroke="#d3d3d3" stroke-width="1.900"/><rect x="1338.400" y="254.400" width="13.600" height="14" rx="2" fill="none" stroke="#9c9c9c" stroke-width="1.100"/><rect x="1340" y="255.800" width="13.600" height="14" rx="2" fill="#535353" stroke="#d3d3d3" stroke-width="1.200"/><path d="M1346.800 256.400H1351V264.100L1348.900 262.300L1346.800 264.100z" fill="#d3d3d3"/><path d="M1338.700 281.300V299.500" stroke="#d3d3d3" stroke-width="1.300"/><rect x="1341" y="284.600" width="6.700" height="5.100" fill="#d3d3d3"/><rect x="1341" y="292" width="12.100" height="4.700" fill="#d3d3d3"/><rect x="1338.400" y="311.200" width="8.800" height="8.800" fill="#d3d3d3"/><rect x="1343" y="316.300" width="10.100" height="9.600" fill="#d3d3d3"/><rect x="1342.500" y="315.800" width="5.200" height="4.700" fill="#c2c2c2" stroke="#535353" stroke-width="1"/></svg><div class="t" style="left:1361.5px;top:124.2px;font-size:11.5px;color:#e6e6e6;-webkit-text-stroke:.2px #e6e6e6">页面</div><div class="t" style="left:1361.5px;top:152.2px;font-size:11.5px;color:#e6e6e6;-webkit-text-stroke:.2px #e6e6e6">图层</div><div class="t" style="left:1361.5px;top:178.8px;font-size:11.5px;color:#e6e6e6;-webkit-text-stroke:.2px #e6e6e6">链接</div><div class="t" style="left:1361.5px;top:247px;font-size:11.5px;color:#e6e6e6;-webkit-text-stroke:.2px #e6e6e6">对齐</div><div class="t" style="left:1361.5px;top:275px;font-size:11.5px;color:#e6e6e6;-webkit-text-stroke:.2px #e6e6e6">路径查找器</div><div class="t" style="left:1361px;top:217.7px;font-size:12.5px;color:#e6e6e6;letter-spacing:-.15px">CC Libraries</div><div class="abs" style="left:71.7px;top:910.4px;width:1250px;height:17.6px;background:#535353"></div><svg style="left:0px;top:0px;" width="1486" height="928" viewBox="2 38 1486 928" ><path d="M73.700 948.700H1323.700" stroke="#494949" stroke-width="1"/><path d="M73.700 965.600H1323.700" stroke="#444" stroke-width="1.200"/><path d="M130 955.6L133.3 959L136.6 955.6" fill="none" stroke="#d3d3d3" stroke-width="1.200"/><path d="M150.300 953.500V961.500" stroke="#8b8b8b" stroke-width="1.400"/><path d="M157.500 953.300V961.700L151.800 957.500z" fill="#8b8b8b"/><path d="M177 953.300V961.700L171.700 957.500z" fill="#8b8b8b"/><rect x="190" y="950.300" width="87.300" height="15" rx="2" fill="#434343" stroke="#6c6c6c" stroke-width="1"/><path d="M260 950.300V965.300" stroke="#6c6c6c" stroke-width="1"/><path d="M265.2 955.9L268.5 959.3L271.8 955.9" fill="none" stroke="#d3d3d3" stroke-width="1.200"/><path d="M289.500 953.300V961.700L294.800 957.500z" fill="#d3d3d3"/><path d="M309.500 953.300V961.700L315.200 957.500z" fill="#d3d3d3"/><path d="M316.700 953.500V961.500" stroke="#d3d3d3" stroke-width="1.400"/><path d="M336 961.500V956A4 4 0 0 1 344 956V961.500" fill="none" stroke="#d3d3d3" stroke-width="1.600"/><path d="M340 955V958.500H343" fill="none" stroke="#d3d3d3" stroke-width="1"/><rect x="346.500" y="961.200" width="1.400" height="1.400" fill="#d3d3d3"/><path d="M466.7 955.6L470 959L473.3 955.6" fill="none" stroke="#d3d3d3" stroke-width="1.200"/><circle cx="494" cy="957.300" r="4.800" fill="#3fa34a"/><path d="M605.7 955.6L609 959L612.3 955.6" fill="none" stroke="#d3d3d3" stroke-width="1.200"/><rect x="617.400" y="949.200" width="669.400" height="16" fill="#4a4a4a"/><rect x="774" y="950.600" width="378" height="13.200" rx="6.600" fill="#6b6d6c"/><rect x="1292.500" y="952.500" width="13.300" height="9.600" fill="none" stroke="#d3d3d3" stroke-width="1.400"/><path d="M1299.200 952.500V962.100" stroke="#d3d3d3" stroke-width="1.400"/><path d="M1313 963.500L1321.500 955M1316.500 963.500L1321.500 958.500M1320 963.500L1321.500 962" stroke="#6e6e6e" stroke-width="1.200" stroke-dasharray="1 1"/></svg><div class="t" style="left:86.3px;top:914.3px;font-size:10.500px;color:#e2e2e2;width:35px;overflow:hidden">158.12!</div><div class="t" style="left:192px;top:914.3px;font-size:10.500px;color:#f0f0f0">1</div><div class="t" style="left:363px;top:914.3px;font-size:10px;color:#e2e2e2">[基本]&nbsp; (工作)</div><div class="t" style="left:503px;top:914.3px;font-size:10px;color:#e2e2e2">无错误</div></div>
<div class="abs" style="left:114.2px;top:37.6px;width:212.6px;height:637.5px;background:#bdbcba;border-radius:6.500px;box-shadow:0 0 0 .5px rgba(0,0,0,.28),0 8px 22px rgba(0,0,0,.33),0 2px 5px rgba(0,0,0,.18)"><div class="mi" style="top:8.22px;color:#1b1b1b">新建</div><svg style="left:190.2px;top:10.22px" width="7" height="11" viewBox="0 0 7 11"><path d="M1.200 1.200L5.600 5.500L1.200 9.800" fill="none" stroke="#1b1b1b" stroke-width="1.900" stroke-linecap="round" stroke-linejoin="round"/></svg><div class="mi" style="top:29.88px;color:#1b1b1b">打开...</div><div class="t" style="left:186.3px;top:29.68px;width:12px;text-align:center;font-size:12.8px;line-height:16px;color:#7e7e7c">O</div><svg style="left:174.3px;top:32.27px" width="10.500" height="10.500" viewBox="0 0 10.500 10.500"><path d="M3.6 3.600h3.300v3.300H3.600zM3.600 3.600V2.300a1.500 1.500 0 1 0-1.500 1.500H3.600M6.900 3.600H8.200a1.500 1.500 0 1 0-1.500-1.500V3.600M6.900 6.900V8.200a1.500 1.500 0 1 0 1.500-1.500H6.900M3.600 6.900H2.300a1.500 1.500 0 1 0 1.500 1.500V6.900" fill="none" stroke="#7e7e7c" stroke-width="1.300"/></svg><div class="mi" style="top:51.52px;color:#1b1b1b">在 Bridge 中浏览...</div><div class="t" style="left:186.3px;top:51.32px;width:12px;text-align:center;font-size:12.8px;line-height:16px;color:#7e7e7c">O</div><svg style="left:174.3px;top:53.92px" width="10.500" height="10.500" viewBox="0 0 10.500 10.500"><path d="M3.6 3.600h3.300v3.300H3.600zM3.600 3.600V2.300a1.500 1.500 0 1 0-1.500 1.500H3.600M6.900 3.600H8.200a1.500 1.500 0 1 0-1.500-1.500V3.600M6.900 6.900V8.200a1.500 1.500 0 1 0 1.500-1.500H6.900M3.600 6.900H2.300a1.500 1.500 0 1 0 1.500 1.500V6.900" fill="none" stroke="#7e7e7c" stroke-width="1.300"/></svg><svg style="left:159.9px;top:53.82px" width="11.500" height="10.500" viewBox="0 0 11.500 10.500"><path d="M.5 1.200H3.800L7.600 9.200H11M6.900 1.200H11" fill="none" stroke="#7e7e7c" stroke-width="1.350"/></svg><div class="mi" style="top:73.17px;color:#1b1b1b">最近打开文件</div><svg style="left:190.2px;top:75.17px" width="7" height="11" viewBox="0 0 7 11"><path d="M1.200 1.200L5.600 5.500L1.200 9.800" fill="none" stroke="#1b1b1b" stroke-width="1.900" stroke-linecap="round" stroke-linejoin="round"/></svg><div class="msep" style="top:96.4px"></div><div class="mi" style="top:105.62px;color:#1b1b1b">关闭</div><div class="t" style="left:186.3px;top:105.42px;width:12px;text-align:center;font-size:12.8px;line-height:16px;color:#7e7e7c">W</div><svg style="left:174.3px;top:108.03px" width="10.500" height="10.500" viewBox="0 0 10.500 10.500"><path d="M3.6 3.600h3.300v3.300H3.600zM3.600 3.600V2.300a1.500 1.500 0 1 0-1.500 1.500H3.600M6.900 3.600H8.200a1.500 1.500 0 1 0-1.500-1.500V3.600M6.900 6.900V8.200a1.500 1.500 0 1 0 1.500-1.500H6.900M3.600 6.900H2.300a1.500 1.500 0 1 0 1.500 1.500V6.900" fill="none" stroke="#7e7e7c" stroke-width="1.300"/></svg><div class="mi" style="top:127.27px;color:#8e8e8c">存储</div><div class="t" style="left:186.3px;top:127.07px;width:12px;text-align:center;font-size:12.8px;line-height:16px;color:#7e7e7c">S</div><svg style="left:174.3px;top:129.67px" width="10.500" height="10.500" viewBox="0 0 10.500 10.500"><path d="M3.6 3.600h3.300v3.300H3.600zM3.600 3.600V2.300a1.500 1.500 0 1 0-1.500 1.500H3.600M6.900 3.600H8.200a1.500 1.500 0 1 0-1.500-1.500V3.600M6.900 6.900V8.200a1.500 1.500 0 1 0 1.500-1.500H6.900M3.600 6.900H2.300a1.500 1.500 0 1 0 1.500 1.500V6.900" fill="none" stroke="#7e7e7c" stroke-width="1.300"/></svg><div class="mi" style="top:148.92px;color:#1b1b1b">存储为...</div><div class="t" style="left:186.3px;top:148.72px;width:12px;text-align:center;font-size:12.8px;line-height:16px;color:#7e7e7c">S</div><svg style="left:174.3px;top:151.32px" width="10.500" height="10.500" viewBox="0 0 10.500 10.500"><path d="M3.6 3.600h3.300v3.300H3.600zM3.600 3.600V2.300a1.500 1.500 0 1 0-1.500 1.500H3.600M6.900 3.600H8.200a1.500 1.500 0 1 0-1.500-1.500V3.600M6.900 6.900V8.200a1.500 1.500 0 1 0 1.500-1.500H6.900M3.600 6.900H2.300a1.500 1.500 0 1 0 1.500 1.500V6.900" fill="none" stroke="#7e7e7c" stroke-width="1.300"/></svg><svg style="left:159.9px;top:151.02px" width="11.500" height="10.500" viewBox="0 0 11.500 10.500"><path d="M5.750.800L10.700 6H8.100V9.900H3.400V6H.8z" fill="none" stroke="#7e7e7c" stroke-width="1.350" stroke-linejoin="round"/></svg><div class="mi" style="top:170.57px;color:#8e8e8c">登记...</div><div class="mi" style="top:192.22px;color:#1b1b1b">存储副本...</div><div class="t" style="left:186.3px;top:192.03px;width:12px;text-align:center;font-size:12.8px;line-height:16px;color:#7e7e7c">S</div><svg style="left:174.3px;top:194.62px" width="10.500" height="10.500" viewBox="0 0 10.500 10.500"><path d="M3.6 3.600h3.300v3.300H3.600zM3.600 3.600V2.300a1.500 1.500 0 1 0-1.500 1.500H3.600M6.900 3.600H8.200a1.500 1.500 0 1 0-1.500-1.500V3.600M6.900 6.900V8.200a1.500 1.500 0 1 0 1.500-1.500H6.900M3.600 6.900H2.300a1.500 1.500 0 1 0 1.500 1.500V6.900" fill="none" stroke="#7e7e7c" stroke-width="1.300"/></svg><svg style="left:159.9px;top:194.53px" width="11.500" height="10.500" viewBox="0 0 11.500 10.500"><path d="M.5 1.200H3.800L7.600 9.200H11M6.900 1.200H11" fill="none" stroke="#7e7e7c" stroke-width="1.350"/></svg><div class="mi" style="top:213.88px;color:#8e8e8c">恢复</div><div class="msep" style="top:237.1px"></div><div class="mi" style="top:246.33px;color:#1b1b1b">置入...</div><div class="t" style="left:186.3px;top:246.13px;width:12px;text-align:center;font-size:12.8px;line-height:16px;color:#7e7e7c">D</div><svg style="left:174.3px;top:248.73px" width="10.500" height="10.500" viewBox="0 0 10.500 10.500"><path d="M3.6 3.600h3.300v3.300H3.600zM3.600 3.600V2.300a1.500 1.500 0 1 0-1.500 1.500H3.600M6.900 3.600H8.200a1.500 1.500 0 1 0-1.500-1.500V3.600M6.900 6.900V8.200a1.500 1.500 0 1 0 1.500-1.500H6.900M3.600 6.900H2.300a1.500 1.500 0 1 0 1.500 1.500V6.900" fill="none" stroke="#7e7e7c" stroke-width="1.300"/></svg><div class="mi" style="top:267.98px;color:#1b1b1b">从 CC 库置入...</div><div class="mi" style="top:289.62px;color:#1b1b1b">导入 XML...</div><div class="mi" style="top:311.27px;color:#1b1b1b">导入 PDF 注释...</div><div class="msep" style="top:334.5px"></div><div class="mi" style="top:343.72px;color:#1b1b1b">Adobe PDF 预设</div><svg style="left:190.2px;top:345.72px" width="7" height="11" viewBox="0 0 7 11"><path d="M1.200 1.200L5.600 5.500L1.200 9.800" fill="none" stroke="#1b1b1b" stroke-width="1.900" stroke-linecap="round" stroke-linejoin="round"/></svg><div class="abs" style="left:4.900px;top:362.05px;width:202.8px;height:21.65px;border-radius:4px;background:#3f6fbe"></div><div class="mi" style="top:365.37px;color:#fff">导出...</div><div class="t" style="left:186.3px;top:365.17px;width:12px;text-align:center;font-size:12.8px;line-height:16px;color:#fff">E</div><svg style="left:174.3px;top:367.77px" width="10.500" height="10.500" viewBox="0 0 10.500 10.500"><path d="M3.6 3.600h3.300v3.300H3.600zM3.600 3.600V2.300a1.500 1.500 0 1 0-1.500 1.500H3.600M6.900 3.600H8.200a1.500 1.500 0 1 0-1.500-1.500V3.600M6.900 6.900V8.200a1.500 1.500 0 1 0 1.500-1.500H6.900M3.600 6.900H2.300a1.500 1.500 0 1 0 1.500 1.500V6.900" fill="none" stroke="#fff" stroke-width="1.300"/></svg><div class="msep" style="top:388.6px"></div><div class="mi" style="top:397.82px;color:#1b1b1b">文档预设</div><svg style="left:190.2px;top:399.82px" width="7" height="11" viewBox="0 0 7 11"><path d="M1.200 1.200L5.600 5.500L1.200 9.800" fill="none" stroke="#1b1b1b" stroke-width="1.900" stroke-linecap="round" stroke-linejoin="round"/></svg><div class="mi" style="top:419.47px;color:#1b1b1b">文档设置...</div><div class="t" style="left:186.3px;top:419.27px;width:12px;text-align:center;font-size:12.8px;line-height:16px;color:#7e7e7c">P</div><svg style="left:174.3px;top:421.87px" width="10.500" height="10.500" viewBox="0 0 10.500 10.500"><path d="M3.6 3.600h3.300v3.300H3.600zM3.600 3.600V2.300a1.500 1.500 0 1 0-1.500 1.500H3.600M6.900 3.600H8.200a1.500 1.500 0 1 0-1.500-1.500V3.600M6.900 6.900V8.200a1.500 1.500 0 1 0 1.500-1.500H6.900M3.600 6.900H2.300a1.500 1.500 0 1 0 1.500 1.500V6.900" fill="none" stroke="#7e7e7c" stroke-width="1.300"/></svg><svg style="left:159.9px;top:421.77px" width="11.500" height="10.500" viewBox="0 0 11.500 10.500"><path d="M.5 1.200H3.800L7.600 9.200H11M6.900 1.200H11" fill="none" stroke="#7e7e7c" stroke-width="1.350"/></svg><div class="mi" style="top:441.12px;color:#1b1b1b">调整版面...</div><div class="t" style="left:186.3px;top:440.92px;width:12px;text-align:center;font-size:12.8px;line-height:16px;color:#7e7e7c">P</div><svg style="left:173.3px;top:443.22px" width="11.500" height="10.500" viewBox="0 0 11.500 10.500"><path d="M5.750.800L10.700 6H8.100V9.900H3.400V6H.8z" fill="none" stroke="#7e7e7c" stroke-width="1.350" stroke-linejoin="round"/></svg><svg style="left:158.9px;top:443.42px" width="11.500" height="10.500" viewBox="0 0 11.500 10.500"><path d="M.5 1.200H3.800L7.600 9.200H11M6.900 1.200H11" fill="none" stroke="#7e7e7c" stroke-width="1.350"/></svg><div class="msep" style="top:464.35px"></div><div class="mi" style="top:473.57px;color:#1b1b1b">用户...</div><div class="mi" style="top:495.22px;color:#1b1b1b">文件信息...</div><div class="t" style="left:186.3px;top:495.02px;width:12px;text-align:center;font-size:12.8px;line-height:16px;color:#7e7e7c">I</div><svg style="left:174.3px;top:497.62px" width="10.500" height="10.500" viewBox="0 0 10.500 10.500"><path d="M3.6 3.600h3.300v3.300H3.600zM3.600 3.600V2.300a1.500 1.500 0 1 0-1.500 1.500H3.600M6.900 3.600H8.200a1.500 1.500 0 1 0-1.500-1.500V3.600M6.900 6.900V8.200a1.500 1.500 0 1 0 1.500-1.500H6.900M3.600 6.900H2.300a1.500 1.500 0 1 0 1.500 1.500V6.900" fill="none" stroke="#7e7e7c" stroke-width="1.300"/></svg><svg style="left:159.9px;top:497.32px" width="11.500" height="10.500" viewBox="0 0 11.500 10.500"><path d="M5.750.800L10.700 6H8.100V9.900H3.400V6H.8z" fill="none" stroke="#7e7e7c" stroke-width="1.350" stroke-linejoin="round"/></svg><svg style="left:145.5px;top:497.52px" width="11.500" height="10.500" viewBox="0 0 11.500 10.500"><path d="M.5 1.200H3.800L7.600 9.200H11M6.900 1.200H11" fill="none" stroke="#7e7e7c" stroke-width="1.350"/></svg><div class="msep" style="top:518.45px"></div><div class="mi" style="top:527.67px;color:#1b1b1b">打包...</div><div class="mi" style="top:549.32px;color:#1b1b1b">打印预设</div><svg style="left:190.2px;top:551.32px" width="7" height="11" viewBox="0 0 7 11"><path d="M1.200 1.200L5.600 5.500L1.200 9.800" fill="none" stroke="#1b1b1b" stroke-width="1.900" stroke-linecap="round" stroke-linejoin="round"/></svg><div class="mi" style="top:570.97px;color:#1b1b1b">打印...</div><div class="t" style="left:186.3px;top:570.77px;width:12px;text-align:center;font-size:12.8px;line-height:16px;color:#7e7e7c">P</div><svg style="left:174.3px;top:573.37px" width="10.500" height="10.500" viewBox="0 0 10.500 10.500"><path d="M3.6 3.600h3.300v3.300H3.600zM3.600 3.600V2.300a1.500 1.500 0 1 0-1.500 1.500H3.600M6.900 3.600H8.200a1.500 1.500 0 1 0-1.500-1.500V3.600M6.900 6.900V8.200a1.500 1.500 0 1 0 1.500-1.500H6.900M3.600 6.900H2.300a1.500 1.500 0 1 0 1.500 1.500V6.900" fill="none" stroke="#7e7e7c" stroke-width="1.300"/></svg><div class="mi" style="top:592.62px;color:#1b1b1b">打印小册子...</div><div class="mi" style="top:614.27px;color:#1b1b1b">打印/导出网格...</div><div class="t" style="left:186.3px;top:614.07px;width:12px;text-align:center;font-size:12.8px;line-height:16px;color:#7e7e7c">P</div><svg style="left:174.3px;top:616.67px" width="10.500" height="10.500" viewBox="0 0 10.500 10.500"><path d="M3.6 3.600h3.300v3.300H3.600zM3.600 3.600V2.300a1.500 1.500 0 1 0-1.500 1.500H3.600M6.900 3.600H8.200a1.500 1.500 0 1 0-1.500-1.500V3.600M6.900 6.900V8.200a1.500 1.500 0 1 0 1.500-1.500H6.900M3.600 6.900H2.300a1.500 1.500 0 1 0 1.500 1.500V6.900" fill="none" stroke="#7e7e7c" stroke-width="1.300"/></svg><svg style="left:159.9px;top:616.37px" width="11.500" height="10.500" viewBox="0 0 11.500 10.500"><path d="M5.750.800L10.700 6H8.100V9.900H3.400V6H.8z" fill="none" stroke="#7e7e7c" stroke-width="1.350" stroke-linejoin="round"/></svg><svg style="left:145.5px;top:616.57px" width="11.500" height="10.500" viewBox="0 0 11.500 10.500"><path d="M.5 1.200H3.800L7.600 9.200H11M6.900 1.200H11" fill="none" stroke="#7e7e7c" stroke-width="1.350"/></svg><div class="abs" style="left:188px;top:352px;width:24.600px;height:285.5px;border-radius:0 0 6.500px 0;background:linear-gradient(to right,rgba(255,255,255,0),rgba(255,255,255,.16))"></div><div class="abs" style="left:0;top:0;width:100%;height:160px;border-radius:6.500px 6.500px 0 0;background:linear-gradient(to bottom,rgba(0,0,0,.03) 0,rgba(0,0,0,.03) 100px,rgba(0,0,0,.045) 128px,rgba(0,0,0,0) 160px)"></div></div>
</body></html>
